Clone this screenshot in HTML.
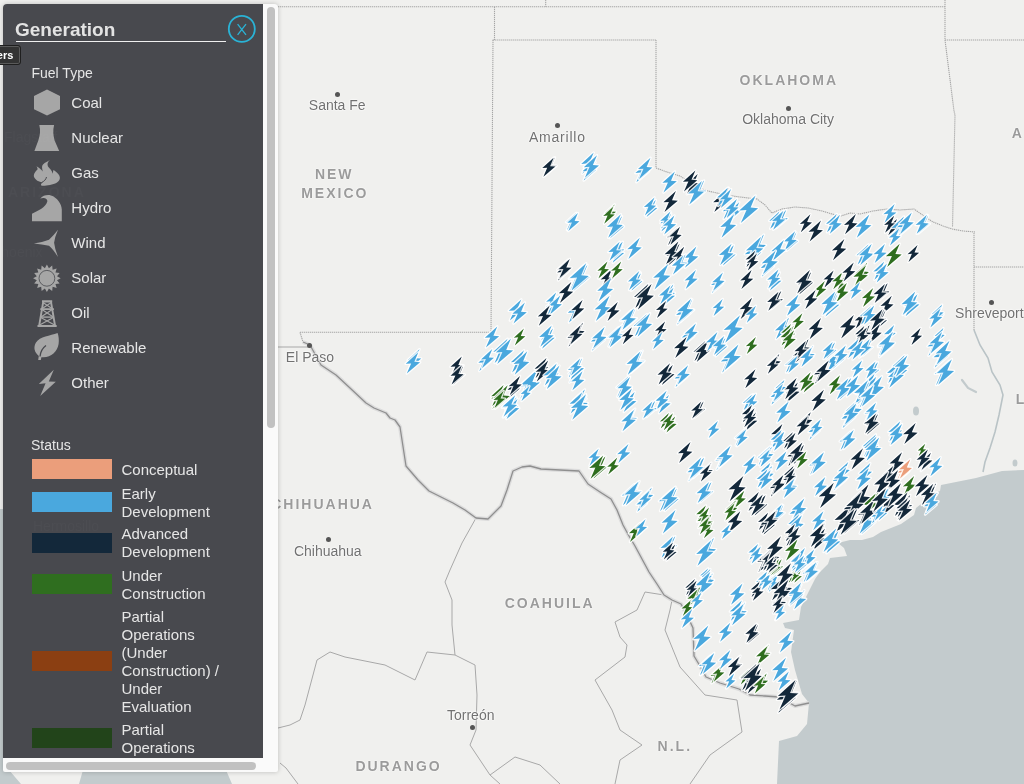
<!DOCTYPE html>
<html><head><meta charset="utf-8">
<style>
html,body{margin:0;padding:0;width:1024px;height:784px;overflow:hidden;background:#f0f0ee;font-family:"Liberation Sans",sans-serif;}
#map{position:absolute;left:0;top:0;width:1024px;height:784px;will-change:transform;}
#map svg{position:absolute;left:0;top:0;}
.us{fill:none;stroke:#a6a6a6;stroke-width:1.1;stroke-dasharray:1.3 0.7;}
.mx{fill:none;stroke:#a8a8a8;stroke-width:1;}
.intl{fill:none;stroke:#8f8f8f;stroke-width:1.3;stroke-linejoin:round;}
.intl2{fill:none;stroke:#dcdcdc;stroke-width:4;stroke-linejoin:round;}
.mb{fill:#4aa8de;}.md{fill:#13283a;}.mg{fill:#2f6e1f;}.mo{fill:#eb9e7b;}.mr{fill:#8b3f12;}.mp{fill:#22441a;}
#mk path{stroke:#fff;stroke-width:2.6;stroke-linejoin:round;stroke-opacity:.85;paint-order:stroke;}
.lbl{position:absolute;color:#717171;font-size:14px;line-height:16px;white-space:nowrap;text-shadow:0 0 2px #fff,0 0 2px #fff,0 0 1px #fff;}
.st{position:absolute;color:#9b9b9b;font-weight:bold;font-size:14px;line-height:16px;letter-spacing:2px;white-space:nowrap;text-shadow:0 0 2px #fff,0 0 1px #fff;}
.dot{position:absolute;width:5px;height:5px;border-radius:50%;background:#555;}
#wrap{position:absolute;left:3px;top:4px;width:275px;height:768px;background:#fafafa;border-radius:4px 4px 2px 2px;box-shadow:0 0 5px rgba(0,0,0,.22);overflow:hidden;}
#panel{will-change:transform;position:absolute;left:0;top:0;width:260px;height:754px;background:#48494e;color:#e6e6e6;overflow:hidden;}
#pc{position:absolute;left:-3px;top:-4px;width:1024px;height:784px;}
.vthumb{position:absolute;left:264.3px;top:3px;width:7.7px;height:421px;border-radius:4px;background:#c1c1c1;}
.hthumb{position:absolute;left:3.2px;top:758px;width:249.5px;height:8px;border-radius:4px;background:#c1c1c1;}
.t{position:absolute;white-space:nowrap;font-size:15px;line-height:18px;}
.sw{position:absolute;left:32px;width:80px;height:20px;}
#tip{will-change:transform;position:absolute;left:-6px;top:45.2px;width:24.7px;height:18.3px;background:#333;border:1px solid #1f1f1f;border-radius:0 3px 3px 0;box-shadow:inset 0 0 0 1px #5a5a5a;color:#fff;font-size:11px;line-height:14px;}
</style></head><body>
<div id="map">
<svg width="1024" height="784">
<path d="M1024 470 L1002 471 L976 478 L941 485 L940 491 L935 493 L916 508 L914 515 L901 524 L881 532 L873 537 L862 540 L850 540 L838 543 L844 548 L847 556 L830 558 L828 564 L820 572 L815 579 L807 595 L801 607 L799 620 L783 623 L785 628 L794 630 L791 652 L795 670 L802 694 L809 703 L807 724 L797 736 L779 741 L777 784 L1024 784 Z" fill="#c3cbcd"/>
<path d="M0 509 L6 509 L6 784 L0 784 Z" fill="#c3cbcd"/>
<path d="M0 770 L9 770 L21 784 L0 784 Z M83 770 L226 770 L232 784 L79 784 Z" fill="#c3cbcd"/>
<path d="M278 6.7 L945 6.7" class="us"/>
<path d="M545.7 0 L545.7 6.7" class="us"/>
<path d="M945 0 L945 40" class="us"/>
<path d="M494.5 6.7 L494.5 40" class="us"/>
<path d="M492.6 40 L656 40" class="us"/>
<path d="M945 40 L1024 40" class="us"/>
<path d="M493 40 L491 332.3" class="us"/>
<path d="M656 40 L656 168" class="us"/>
<path d="M300 332.3 L491 332.3" class="us"/>
<path d="M300 332.3 L303 342" class="us"/>
<path d="M945 40 L954 111 L955 115 L952.5 227" class="us"/>
<path d="M974 233 L974 330" class="us"/>
<path d="M974 267 L1024 267" class="us"/>
<path d="M656 168 L667 172 L680 176 L699 188 L708 191 L726 195 L740 197 L757 199 L765 205 L772 213 L782 209 L795 207 L808 208 L822 211 L832 214 L841 216 L850 213 L860 214 L873 211 L887 209 L900 210 L914 209 L924 216 L933 222 L943 226 L952 229 L963 231 L975 232" class="us"/>
<path d="M278 347 L310 347" class="mx"/>
<path d="M476 518 L462 543 L450 570 L445 582 L452 600 L452 625 L455 655 L475 665 L477 695 L476 730 L470 745 L480 760 L490 775 L500 784" class="mx"/>
<path d="M455 655 L427 652 L415 680 L385 665 L345 657 L330 652 L317 660 L305 705 L300 720 L290 725 L278 728" class="mx"/>
<path d="M490 775 L515 757 L540 765 L560 784" class="mx"/>
<path d="M664 595 L645 592 L637 610 L615 622 L620 637 L627 645 L625 657 L595 680 L612 710 L620 730 L642 745 L620 760 L615 784" class="mx"/>
<path d="M672 600 L670 610 L665 630 L680 667 L705 695 L737 700 L742 732 L710 755 L690 784" class="mx"/>
<path d="M974 330 L980 345 L988 358 L992 372 L1000 385 L1003 395 L999 415 L995 432 L990 448 L985 462 L983 472" fill="none" stroke="#b9c3c6" stroke-width="1.6"/>
<path d="M962 380 L968 388 L976 392" fill="none" stroke="#c3cbcd" stroke-width="2.2" stroke-linecap="round"/>
<ellipse cx="916" cy="411" rx="3" ry="4.5" fill="#c3cbcd"/><ellipse cx="1015" cy="463" rx="2.5" ry="3.5" fill="#c3cbcd"/>
<path d="M280 763 L286 768 L292 776 L298 784" fill="none" stroke="#a8a8a8" stroke-width="1"/>
<path d="M303 342 L310 345 L321 365 L336 375 L350 388 L366 403 L374 408 L386 413 L390 418 L395 420 L400 427 L402 440 L406 466 L418 480 L429 491 L441 497 L453 503 L465 510 L476 518 L488 519 L501 506 L507 490 L513 471 L522 467 L530 466 L541 469 L560 470 L579 471 L588 484 L600 492 L611 499 L617 510 L623 525 L629 536 L635 546 L642 559 L649 572 L657 584 L664 595 L672 600 L681 604 L687 615 L693 628 L694 656 L700 666 L706 677 L720 683 L739 689 L750 695 L765 696 L779 697 L795 706 L809 703" class="intl2"/>
<path d="M303 342 L310 345 L321 365 L336 375 L350 388 L366 403 L374 408 L386 413 L390 418 L395 420 L400 427 L402 440 L406 466 L418 480 L429 491 L441 497 L453 503 L465 510 L476 518 L488 519 L501 506 L507 490 L513 471 L522 467 L530 466 L541 469 L560 470 L579 471 L588 484 L600 492 L611 499 L617 510 L623 525 L629 536 L635 546 L642 559 L649 572 L657 584 L664 595 L672 600 L681 604 L687 615 L693 628 L694 656 L700 666 L706 677 L720 683 L739 689 L750 695 L765 696 L779 697 L795 706 L809 703" class="intl"/>
</svg>
<div class="lbl" style="left:308.8px;top:96.9px">Santa Fe</div>
<div class="lbl" style="left:528.9px;top:128.6px;letter-spacing:0.8px">Amarillo</div>
<div class="lbl" style="left:742.2px;top:110.8px">Oklahoma City</div>
<div class="lbl" style="left:285.8px;top:348.6px">El Paso</div>
<div class="lbl" style="left:293.9px;top:543.0px">Chihuahua</div>
<div class="lbl" style="left:447.0px;top:707.4px">Torreón</div>
<div class="lbl" style="left:955.1px;top:305.0px">Shreveport</div>
<div class="st" style="left:314.9px;top:166.3px">NEW</div>
<div class="st" style="left:301.2px;top:185.1px">MEXICO</div>
<div class="st" style="left:739.6px;top:72.3px">OKLAHOMA</div>
<div class="st" style="left:271.2px;top:495.7px">CHIHUAHUA</div>
<div class="st" style="left:504.7px;top:595.0px">COAHUILA</div>
<div class="st" style="left:355.4px;top:758.3px">DURANGO</div>
<div class="st" style="left:657.6px;top:738.4px">N.L.</div>
<div class="st" style="left:1011.7px;top:125.1px">A</div>
<div class="st" style="left:1015.7px;top:391.1px">L</div>
<div class="dot" style="left:334.5px;top:91.5px"></div>
<div class="dot" style="left:555.0px;top:123.2px"></div>
<div class="dot" style="left:786.2px;top:105.7px"></div>
<div class="dot" style="left:307.0px;top:343.1px"></div>
<div class="dot" style="left:326.1px;top:536.9px"></div>
<div class="dot" style="left:470.2px;top:725.3px"></div>
<div class="dot" style="left:988.5px;top:300.2px"></div>
<svg width="1024" height="784" id="mk">
<path class="md" d="M554.9 157.4 L544.1 167.2 L548.8 166.8 L545.1 175.5 L556.5 165.7 L551.5 165.4 Z"/>
<path class="md" d="M553.6 157.8 L542.3 168.1 L547.2 167.7 L543.4 176.8 L555.3 166.5 L550.1 166.2 Z"/>
<path class="mb" d="M593.7 152.6 L581.2 164.0 L586.7 163.6 L582.4 173.7 L595.6 162.3 L589.8 161.9 Z"/>
<path class="mb" d="M594.4 160.5 L582.6 171.3 L587.8 170.9 L583.7 180.5 L596.2 169.7 L590.8 169.3 Z"/>
<path class="mb" d="M597.0 155.3 L583.8 167.3 L589.6 166.8 L585.0 177.5 L599.0 165.5 L592.9 165.1 Z"/>
<path class="mb" d="M576.2 212.9 L566.1 222.2 L570.5 221.8 L567.0 230.0 L577.7 220.8 L573.1 220.4 Z"/>
<path class="mb" d="M577.9 213.0 L567.3 222.7 L571.9 222.4 L568.3 231.0 L579.5 221.3 L574.6 220.9 Z"/>
<path class="md" d="M568.1 259.8 L557.3 269.6 L562.0 269.3 L558.3 278.0 L569.7 268.2 L564.7 267.8 Z"/>
<path class="md" d="M567.3 263.2 L557.2 272.5 L561.6 272.1 L558.1 280.4 L568.8 271.1 L564.2 270.7 Z"/>
<path class="md" d="M569.8 259.0 L558.5 269.3 L563.4 268.9 L559.6 278.0 L571.5 267.7 L566.3 267.4 Z"/>
<path class="mb" d="M587.4 265.0 L571.9 279.1 L578.7 278.6 L573.3 291.1 L589.7 277.0 L582.6 276.5 Z"/>
<path class="mb" d="M583.5 265.4 L568.9 278.8 L575.3 278.3 L570.2 290.2 L585.7 276.8 L579.0 276.3 Z"/>
<path class="mb" d="M586.2 263.2 L569.9 278.1 L577.1 277.6 L571.4 290.8 L588.7 275.9 L581.2 275.3 Z"/>
<path class="mb" d="M419.5 349.3 L407.6 360.2 L412.8 359.8 L408.6 369.4 L421.2 358.6 L415.8 358.2 Z"/>
<path class="mb" d="M418.2 352.4 L405.7 363.8 L411.2 363.4 L406.8 373.6 L420.1 362.2 L414.3 361.7 Z"/>
<path class="md" d="M461.8 356.5 L450.5 366.8 L455.4 366.4 L451.6 375.5 L463.5 365.2 L458.3 364.9 Z"/>
<path class="md" d="M463.1 366.3 L452.3 376.1 L457.0 375.7 L453.3 384.4 L464.7 374.6 L459.7 374.2 Z"/>
<path class="md" d="M461.8 365.5 L450.5 375.8 L455.4 375.4 L451.6 384.5 L463.5 374.2 L458.3 373.9 Z"/>
<path class="mb" d="M521.3 299.4 L508.8 310.8 L514.3 310.4 L509.9 320.6 L523.2 309.2 L517.4 308.7 Z"/>
<path class="mb" d="M524.9 302.4 L512.4 313.8 L517.9 313.4 L513.5 323.6 L526.8 312.2 L521.0 311.7 Z"/>
<path class="md" d="M571.3 281.9 L558.8 293.3 L564.3 292.9 L559.9 303.1 L573.2 291.7 L567.4 291.2 Z"/>
<path class="mb" d="M557.0 297.0 L546.2 306.8 L550.9 306.5 L547.2 315.2 L558.6 305.4 L553.6 305.0 Z"/>
<path class="mb" d="M556.2 292.4 L546.1 301.7 L550.5 301.3 L547.0 309.6 L557.7 300.3 L553.1 299.9 Z"/>
<path class="mb" d="M560.2 295.5 L548.9 305.8 L553.8 305.4 L550.0 314.5 L561.9 304.2 L556.7 303.9 Z"/>
<path class="md" d="M549.7 305.6 L537.8 316.5 L543.0 316.1 L538.8 325.8 L551.4 314.9 L546.0 314.5 Z"/>
<path class="mb" d="M497.3 326.4 L484.8 337.8 L490.3 337.4 L485.9 347.6 L499.2 336.2 L493.4 335.7 Z"/>
<path class="mg" d="M523.9 328.5 L513.8 337.7 L518.2 337.3 L514.8 345.5 L525.4 336.3 L520.8 336.0 Z"/>
<path class="mb" d="M507.6 338.7 L493.3 351.8 L499.5 351.3 L494.6 362.9 L509.7 349.9 L503.1 349.4 Z"/>
<path class="mb" d="M510.9 338.7 L495.9 352.4 L502.4 351.9 L497.2 364.1 L513.1 350.4 L506.2 349.9 Z"/>
<path class="mb" d="M489.1 352.9 L478.3 362.7 L483.0 362.4 L479.3 371.1 L490.7 361.3 L485.7 360.9 Z"/>
<path class="mb" d="M492.3 349.1 L481.0 359.4 L485.9 359.0 L482.1 368.1 L494.0 357.8 L488.8 357.5 Z"/>
<path class="mb" d="M553.0 328.5 L541.1 339.4 L546.3 339.0 L542.1 348.7 L554.7 337.8 L549.3 337.4 Z"/>
<path class="mb" d="M551.7 325.6 L539.2 337.1 L544.7 336.7 L540.3 346.8 L553.6 335.4 L547.8 335.0 Z"/>
<path class="md" d="M578.8 327.5 L567.5 337.8 L572.4 337.4 L568.6 346.5 L580.5 336.2 L575.3 335.9 Z"/>
<path class="mb" d="M524.0 350.3 L510.9 362.3 L516.6 361.8 L512.1 372.5 L525.9 360.5 L519.9 360.1 Z"/>
<path class="mb" d="M527.3 351.3 L513.5 363.9 L519.5 363.5 L514.7 374.7 L529.3 362.1 L523.0 361.6 Z"/>
<path class="mb" d="M534.5 372.3 L519.0 386.5 L525.8 386.0 L520.4 398.5 L536.8 384.4 L529.7 383.9 Z"/>
<path class="mb" d="M537.3 369.8 L521.0 384.7 L528.2 384.2 L522.5 397.4 L539.8 382.5 L532.3 381.9 Z"/>
<path class="md" d="M546.5 357.9 L534.6 368.8 L539.8 368.3 L535.6 378.0 L548.2 367.1 L542.8 366.7 Z"/>
<path class="md" d="M548.2 360.4 L535.7 371.8 L541.2 371.4 L536.8 381.6 L550.1 370.2 L544.3 369.7 Z"/>
<path class="mb" d="M556.7 363.4 L543.6 375.4 L549.3 375.0 L544.8 385.6 L558.6 373.6 L552.6 373.2 Z"/>
<path class="mb" d="M559.5 365.6 L545.7 378.2 L551.7 377.8 L546.9 389.0 L561.5 376.4 L555.2 375.9 Z"/>
<path class="md" d="M518.3 380.0 L507.5 389.8 L512.2 389.5 L508.5 398.2 L519.9 388.4 L514.9 388.0 Z"/>
<path class="md" d="M520.0 375.9 L508.7 386.2 L513.6 385.8 L509.8 394.9 L521.7 384.6 L516.5 384.3 Z"/>
<path class="mg" d="M504.4 386.5 L491.3 398.5 L497.0 398.0 L492.5 408.7 L506.3 396.7 L500.3 396.3 Z"/>
<path class="mg" d="M503.6 384.9 L491.2 396.2 L496.6 395.8 L492.3 405.9 L505.4 394.6 L499.7 394.1 Z"/>
<path class="mg" d="M507.7 385.3 L493.9 397.9 L499.9 397.5 L495.1 408.7 L509.7 396.1 L503.4 395.6 Z"/>
<path class="mb" d="M516.6 397.4 L504.7 408.2 L509.9 407.8 L505.7 417.5 L518.3 406.6 L512.9 406.2 Z"/>
<path class="mb" d="M514.3 396.2 L501.8 407.6 L507.3 407.2 L502.9 417.4 L516.2 406.0 L510.4 405.5 Z"/>
<path class="mb" d="M580.4 362.5 L568.5 373.4 L573.7 373.0 L569.5 382.6 L582.1 371.8 L576.7 371.3 Z"/>
<path class="mb" d="M582.1 358.4 L569.6 369.8 L575.1 369.4 L570.7 379.6 L584.0 368.2 L578.2 367.7 Z"/>
<path class="mb" d="M584.9 389.4 L573.0 400.3 L578.2 399.9 L574.0 409.6 L586.6 398.7 L581.2 398.3 Z"/>
<path class="mb" d="M582.1 392.4 L569.6 403.8 L575.1 403.4 L570.7 413.6 L584.0 402.2 L578.2 401.7 Z"/>
<path class="mb" d="M580.3 301.4 L567.8 312.8 L573.3 312.4 L568.9 322.6 L582.2 311.2 L576.4 310.7 Z"/>
<path class="mb" d="M647.3 162.2 L635.4 173.1 L640.6 172.6 L636.4 182.3 L649.0 171.4 L643.6 171.0 Z"/>
<path class="mb" d="M650.5 157.7 L638.0 169.1 L643.5 168.7 L639.1 178.9 L652.4 167.5 L646.6 167.0 Z"/>
<path class="mb" d="M674.9 171.4 L662.4 182.8 L667.9 182.4 L663.5 192.6 L676.8 181.2 L671.0 180.7 Z"/>
<path class="md" d="M697.7 174.0 L685.8 184.9 L691.0 184.5 L686.8 194.2 L699.4 183.3 L694.0 182.9 Z"/>
<path class="md" d="M695.4 170.4 L682.9 181.8 L688.4 181.4 L684.0 191.6 L697.3 180.2 L691.5 179.7 Z"/>
<path class="mb" d="M704.1 180.5 L691.0 192.4 L696.7 192.0 L692.2 202.6 L706.0 190.7 L700.0 190.2 Z"/>
<path class="mb" d="M701.9 181.0 L688.1 193.6 L694.1 193.2 L689.3 204.4 L703.9 191.8 L697.6 191.3 Z"/>
<path class="md" d="M675.9 190.9 L663.4 202.3 L668.9 201.9 L664.5 212.1 L677.8 200.7 L672.0 200.2 Z"/>
<path class="mb" d="M655.8 200.0 L645.7 209.2 L650.1 208.9 L646.6 217.1 L657.3 207.9 L652.7 207.5 Z"/>
<path class="mb" d="M654.5 197.4 L643.9 207.1 L648.5 206.8 L644.9 215.4 L656.1 205.7 L651.2 205.3 Z"/>
<path class="md" d="M727.0 190.6 L715.1 201.5 L720.3 201.1 L716.1 210.8 L728.7 199.9 L723.3 199.5 Z"/>
<path class="md" d="M728.7 187.8 L717.4 198.1 L722.3 197.7 L718.5 206.8 L730.4 196.5 L725.2 196.2 Z"/>
<path class="md" d="M725.7 190.9 L713.2 202.3 L718.7 201.9 L714.3 212.1 L727.6 200.7 L721.8 200.2 Z"/>
<path class="mb" d="M727.8 187.8 L717.1 197.5 L721.8 197.2 L718.1 205.9 L729.4 196.1 L724.5 195.7 Z"/>
<path class="mb" d="M731.1 189.1 L719.8 199.4 L724.7 199.0 L720.8 208.1 L732.7 197.8 L727.5 197.5 Z"/>
<path class="mb" d="M739.2 202.2 L728.4 212.0 L733.1 211.7 L729.4 220.4 L740.8 210.6 L735.8 210.2 Z"/>
<path class="mb" d="M732.9 201.9 L722.8 211.2 L727.2 210.8 L723.7 219.0 L734.4 209.8 L729.8 209.4 Z"/>
<path class="mb" d="M736.9 198.9 L725.6 209.2 L730.5 208.8 L726.7 217.9 L738.6 207.6 L733.4 207.3 Z"/>
<path class="mb" d="M755.6 195.5 L739.3 210.4 L746.5 209.9 L740.8 223.1 L758.1 208.2 L750.6 207.6 Z"/>
<path class="mb" d="M734.1 214.3 L720.3 226.9 L726.3 226.5 L721.5 237.7 L736.1 225.1 L729.8 224.6 Z"/>
<path class="mg" d="M614.6 204.4 L605.0 213.1 L609.2 212.7 L605.9 220.5 L616.0 211.8 L611.6 211.4 Z"/>
<path class="mg" d="M613.3 206.7 L603.2 215.9 L607.6 215.5 L604.2 223.7 L614.8 214.5 L610.2 214.2 Z"/>
<path class="mb" d="M622.0 216.2 L608.9 228.2 L614.6 227.7 L610.1 238.3 L623.9 226.4 L617.9 225.9 Z"/>
<path class="mb" d="M620.8 214.3 L607.0 226.9 L613.0 226.5 L608.2 237.7 L622.8 225.1 L616.5 224.6 Z"/>
<path class="mb" d="M671.2 213.4 L660.4 223.2 L665.1 222.8 L661.4 231.5 L672.8 221.7 L667.8 221.4 Z"/>
<path class="mb" d="M670.4 211.5 L660.3 220.7 L664.7 220.4 L661.2 228.6 L671.9 219.4 L667.3 219.0 Z"/>
<path class="mb" d="M674.4 215.5 L663.1 225.8 L668.0 225.4 L664.2 234.5 L676.1 224.2 L670.9 223.9 Z"/>
<path class="md" d="M677.3 228.0 L667.2 237.3 L671.6 236.9 L668.1 245.1 L678.8 235.9 L674.2 235.6 Z"/>
<path class="md" d="M680.0 226.7 L669.4 236.4 L674.0 236.1 L670.4 244.7 L681.6 235.0 L676.7 234.6 Z"/>
<path class="md" d="M679.6 243.7 L666.5 255.7 L672.2 255.3 L667.7 265.9 L681.5 253.9 L675.5 253.5 Z"/>
<path class="md" d="M678.4 241.6 L664.6 254.2 L670.6 253.8 L665.8 265.0 L680.4 252.4 L674.1 251.9 Z"/>
<path class="md" d="M684.2 246.7 L672.9 257.0 L677.8 256.6 L674.0 265.7 L685.9 255.4 L680.7 255.1 Z"/>
<path class="mb" d="M696.4 246.6 L683.9 258.0 L689.4 257.6 L685.0 267.8 L698.3 256.4 L692.5 255.9 Z"/>
<path class="mb" d="M639.8 237.8 L627.3 249.2 L632.8 248.8 L628.4 259.0 L641.7 247.6 L635.9 247.1 Z"/>
<path class="mb" d="M622.5 244.6 L611.7 254.4 L616.4 254.0 L612.7 262.7 L624.1 253.0 L619.1 252.6 Z"/>
<path class="mb" d="M622.7 241.7 L612.6 251.0 L617.0 250.6 L613.5 258.9 L624.2 249.6 L619.6 249.3 Z"/>
<path class="mb" d="M619.7 241.8 L608.4 252.1 L613.3 251.7 L609.5 260.8 L621.4 250.5 L616.2 250.2 Z"/>
<path class="mb" d="M733.8 245.3 L721.9 256.2 L727.1 255.8 L723.0 265.4 L735.6 254.6 L730.1 254.2 Z"/>
<path class="mb" d="M731.6 243.7 L719.0 255.1 L724.5 254.7 L720.2 264.9 L733.5 253.5 L727.7 253.0 Z"/>
<path class="mb" d="M759.2 241.2 L744.9 254.2 L751.1 253.8 L746.2 265.4 L761.3 252.3 L754.7 251.8 Z"/>
<path class="mb" d="M763.9 234.6 L750.3 246.9 L756.2 246.5 L751.6 257.5 L765.9 245.1 L759.7 244.6 Z"/>
<path class="mb" d="M761.0 236.7 L746.0 250.4 L752.5 249.9 L747.3 262.1 L763.2 248.4 L756.3 247.9 Z"/>
<path class="md" d="M755.2 250.8 L745.6 259.5 L749.8 259.1 L746.5 266.9 L756.6 258.2 L752.2 257.9 Z"/>
<path class="md" d="M756.9 253.5 L746.8 262.7 L751.2 262.3 L747.8 270.5 L758.4 261.3 L753.8 261.0 Z"/>
<path class="mb" d="M772.1 257.5 L760.8 267.8 L765.7 267.4 L761.9 276.5 L773.8 266.2 L768.6 265.9 Z"/>
<path class="mg" d="M607.5 261.5 L597.4 270.7 L601.8 270.3 L598.4 278.5 L609.0 269.3 L604.4 269.0 Z"/>
<path class="md" d="M611.9 269.2 L600.6 279.5 L605.5 279.1 L601.7 288.2 L613.6 277.9 L608.4 277.6 Z"/>
<path class="mg" d="M621.2 261.5 L611.1 270.7 L615.5 270.3 L612.1 278.5 L622.7 269.3 L618.1 269.0 Z"/>
<path class="mb" d="M640.6 272.4 L629.8 282.2 L634.5 281.9 L630.8 290.6 L642.2 280.8 L637.2 280.4 Z"/>
<path class="mb" d="M640.8 273.4 L630.7 282.6 L635.1 282.3 L631.6 290.5 L642.3 281.3 L637.7 280.9 Z"/>
<path class="mb" d="M639.3 271.1 L628.0 281.4 L632.9 281.0 L629.1 290.1 L641.0 279.8 L635.8 279.5 Z"/>
<path class="mb" d="M668.2 264.0 L653.2 277.7 L659.7 277.2 L654.5 289.4 L670.4 275.7 L663.5 275.2 Z"/>
<path class="mb" d="M695.9 270.1 L684.6 280.4 L689.5 280.0 L685.7 289.1 L697.6 278.8 L692.4 278.5 Z"/>
<path class="mb" d="M721.2 275.8 L711.1 285.1 L715.5 284.7 L712.0 293.0 L722.7 283.7 L718.1 283.4 Z"/>
<path class="mb" d="M722.9 272.6 L712.3 282.3 L716.9 282.0 L713.3 290.6 L724.5 280.9 L719.6 280.5 Z"/>
<path class="md" d="M751.6 270.1 L740.3 280.4 L745.2 280.0 L741.4 289.1 L753.3 278.8 L748.1 278.5 Z"/>
<path class="mb" d="M685.5 254.4 L674.7 264.2 L679.4 263.9 L675.7 272.6 L687.1 262.8 L682.1 262.4 Z"/>
<path class="mb" d="M683.2 255.5 L671.9 265.8 L676.8 265.4 L673.0 274.5 L684.9 264.2 L679.7 263.9 Z"/>
<path class="mb" d="M786.2 210.0 L775.4 219.8 L780.1 219.4 L776.4 228.1 L787.8 218.3 L782.8 218.0 Z"/>
<path class="mb" d="M779.4 211.5 L769.3 220.8 L773.7 220.4 L770.2 228.7 L780.9 219.4 L776.3 219.1 Z"/>
<path class="mb" d="M783.4 210.8 L772.1 221.1 L777.0 220.7 L773.2 229.8 L785.1 219.5 L779.9 219.2 Z"/>
<path class="md" d="M810.4 214.2 L799.8 223.9 L804.4 223.6 L800.8 232.2 L812.0 222.5 L807.1 222.1 Z"/>
<path class="md" d="M821.0 220.4 L808.5 231.8 L814.0 231.4 L809.6 241.6 L822.9 230.2 L817.1 229.7 Z"/>
<path class="mb" d="M836.8 214.0 L826.0 223.8 L830.7 223.5 L827.0 232.2 L838.4 222.4 L833.4 222.0 Z"/>
<path class="mb" d="M840.0 214.7 L828.7 225.0 L833.6 224.6 L829.8 233.7 L841.7 223.4 L836.5 223.1 Z"/>
<path class="md" d="M855.9 214.1 L844.0 225.0 L849.2 224.6 L845.0 234.3 L857.6 223.4 L852.2 223.0 Z"/>
<path class="mb" d="M869.4 214.4 L855.6 227.0 L861.6 226.6 L856.8 237.8 L871.4 225.2 L865.1 224.7 Z"/>
<path class="mb" d="M894.7 203.9 L883.4 214.2 L888.3 213.8 L884.5 222.9 L896.4 212.6 L891.2 212.3 Z"/>
<path class="md" d="M897.0 219.1 L887.4 227.8 L891.6 227.4 L888.3 235.2 L898.4 226.5 L894.0 226.1 Z"/>
<path class="md" d="M894.2 215.7 L884.1 224.9 L888.5 224.5 L885.1 232.7 L895.7 223.5 L891.1 223.2 Z"/>
<path class="mb" d="M904.0 216.5 L891.5 227.9 L897.0 227.5 L892.6 237.7 L905.9 226.3 L900.1 225.8 Z"/>
<path class="mb" d="M909.1 216.4 L897.2 227.3 L902.4 226.9 L898.2 236.5 L910.8 225.7 L905.4 225.3 Z"/>
<path class="mb" d="M911.8 212.6 L899.3 224.0 L904.8 223.6 L900.4 233.8 L913.7 222.4 L907.9 221.9 Z"/>
<path class="mb" d="M928.2 215.4 L917.4 225.2 L922.1 224.8 L918.4 233.5 L929.8 223.7 L924.8 223.4 Z"/>
<path class="mb" d="M926.9 214.7 L915.6 225.0 L920.5 224.6 L916.7 233.7 L928.6 223.4 L923.4 223.1 Z"/>
<path class="mb" d="M899.1 228.4 L889.0 237.6 L893.4 237.2 L890.0 245.4 L900.6 236.2 L896.0 235.9 Z"/>
<path class="mb" d="M796.4 232.6 L785.6 242.4 L790.3 242.1 L786.6 250.8 L798.0 241.0 L793.0 240.6 Z"/>
<path class="mb" d="M795.1 231.3 L783.8 241.6 L788.7 241.2 L784.9 250.3 L796.8 240.0 L791.6 239.7 Z"/>
<path class="mb" d="M783.9 239.9 L771.4 251.3 L776.9 250.9 L772.5 261.1 L785.8 249.7 L780.0 249.2 Z"/>
<path class="mb" d="M775.7 250.6 L761.9 263.2 L767.9 262.8 L763.1 274.0 L777.7 261.4 L771.4 260.9 Z"/>
<path class="mb" d="M779.8 272.4 L769.0 282.2 L773.7 281.8 L770.0 290.5 L781.4 280.7 L776.4 280.4 Z"/>
<path class="mb" d="M778.5 269.4 L767.2 279.7 L772.1 279.3 L768.3 288.4 L780.2 278.1 L775.0 277.8 Z"/>
<path class="md" d="M844.4 239.0 L831.9 250.4 L837.4 250.0 L833.0 260.2 L846.3 248.8 L840.5 248.3 Z"/>
<path class="mb" d="M868.5 244.4 L856.6 255.2 L861.8 254.8 L857.6 264.5 L870.2 253.6 L864.8 253.2 Z"/>
<path class="mb" d="M871.7 243.9 L859.2 255.3 L864.7 254.9 L860.3 265.1 L873.6 253.7 L867.8 253.2 Z"/>
<path class="mb" d="M884.9 244.0 L873.6 254.3 L878.5 253.9 L874.7 263.0 L886.6 252.7 L881.4 252.4 Z"/>
<path class="mg" d="M899.7 243.7 L885.9 256.3 L891.9 255.9 L887.1 267.1 L901.7 254.5 L895.4 254.0 Z"/>
<path class="md" d="M917.6 245.0 L907.5 254.2 L911.9 253.8 L908.5 262.0 L919.1 252.8 L914.5 252.5 Z"/>
<path class="md" d="M811.1 272.3 L798.0 284.2 L803.7 283.8 L799.2 294.4 L813.0 282.5 L807.0 282.0 Z"/>
<path class="md" d="M809.9 270.1 L796.1 282.7 L802.1 282.3 L797.3 293.5 L811.9 280.9 L805.6 280.4 Z"/>
<path class="md" d="M833.6 270.4 L823.5 279.6 L827.9 279.2 L824.5 287.4 L835.1 278.2 L830.5 277.9 Z"/>
<path class="mg" d="M845.2 276.6 L835.6 285.3 L839.8 285.0 L836.5 292.8 L846.6 284.1 L842.2 283.7 Z"/>
<path class="mg" d="M842.4 272.3 L832.3 281.5 L836.7 281.1 L833.3 289.3 L843.9 280.1 L839.3 279.8 Z"/>
<path class="md" d="M853.7 262.5 L842.4 272.8 L847.3 272.4 L843.5 281.5 L855.4 271.2 L850.2 270.9 Z"/>
<path class="mg" d="M867.2 262.7 L855.3 273.6 L860.5 273.2 L856.3 282.9 L868.9 272.0 L863.5 271.6 Z"/>
<path class="mg" d="M865.9 265.4 L853.4 276.8 L858.9 276.4 L854.5 286.6 L867.8 275.2 L862.0 274.7 Z"/>
<path class="mb" d="M884.2 261.6 L873.4 271.4 L878.1 271.0 L874.4 279.7 L885.8 269.9 L880.8 269.5 Z"/>
<path class="mb" d="M886.9 263.5 L875.6 273.8 L880.5 273.4 L876.7 282.5 L888.6 272.2 L883.4 271.9 Z"/>
<path class="mg" d="M824.8 281.1 L814.7 290.3 L819.1 289.9 L815.7 298.1 L826.3 288.9 L821.7 288.6 Z"/>
<path class="mg" d="M846.8 283.0 L835.5 293.3 L840.4 292.9 L836.6 302.0 L848.5 291.7 L843.3 291.4 Z"/>
<path class="mb" d="M860.0 282.1 L849.9 291.3 L854.3 290.9 L850.9 299.1 L861.5 289.9 L856.9 289.6 Z"/>
<path class="md" d="M887.7 283.2 L876.9 293.0 L881.6 292.6 L877.9 301.3 L889.3 291.5 L884.3 291.2 Z"/>
<path class="md" d="M884.9 284.0 L873.6 294.3 L878.5 293.9 L874.7 303.0 L886.6 292.7 L881.4 292.4 Z"/>
<path class="mg" d="M873.2 287.9 L861.9 298.2 L866.8 297.8 L863.0 306.9 L874.9 296.6 L869.7 296.3 Z"/>
<path class="md" d="M815.6 289.9 L804.3 300.2 L809.2 299.8 L805.4 308.9 L817.3 298.6 L812.1 298.3 Z"/>
<path class="mb" d="M837.4 294.5 L824.3 306.4 L830.0 306.0 L825.5 316.6 L839.3 304.7 L833.3 304.2 Z"/>
<path class="mb" d="M836.6 292.6 L824.2 303.9 L829.6 303.5 L825.3 313.6 L838.4 302.2 L832.7 301.8 Z"/>
<path class="mb" d="M835.2 291.6 L821.4 304.2 L827.4 303.8 L822.6 315.0 L837.2 302.4 L830.9 301.9 Z"/>
<path class="md" d="M781.3 290.9 L770.5 300.7 L775.2 300.3 L771.5 309.0 L782.9 299.2 L777.9 298.9 Z"/>
<path class="md" d="M778.5 291.8 L767.2 302.1 L772.1 301.7 L768.3 310.8 L780.2 300.5 L775.0 300.2 Z"/>
<path class="mb" d="M798.5 294.6 L786.0 306.0 L791.5 305.6 L787.1 315.8 L800.4 304.4 L794.6 303.9 Z"/>
<path class="md" d="M891.8 295.7 L880.5 306.0 L885.4 305.6 L881.6 314.7 L893.5 304.4 L888.3 304.1 Z"/>
<path class="mb" d="M917.5 294.2 L904.4 306.1 L910.1 305.7 L905.6 316.3 L919.4 304.4 L913.4 303.9 Z"/>
<path class="mb" d="M915.3 291.6 L901.5 304.2 L907.5 303.8 L902.7 315.0 L917.3 302.4 L911.0 301.9 Z"/>
<path class="mb" d="M941.9 306.2 L931.1 316.0 L935.8 315.6 L932.1 324.3 L943.5 314.5 L938.5 314.2 Z"/>
<path class="mb" d="M942.1 304.6 L932.0 313.9 L936.4 313.5 L932.9 321.8 L943.6 312.5 L939.0 312.1 Z"/>
<path class="mb" d="M940.6 308.4 L929.3 318.7 L934.2 318.3 L930.4 327.4 L942.3 317.1 L937.1 316.8 Z"/>
<path class="mg" d="M802.4 313.3 L792.3 322.5 L796.7 322.1 L793.3 330.3 L803.9 321.1 L799.3 320.8 Z"/>
<path class="mb" d="M789.1 317.7 L778.3 327.5 L783.0 327.1 L779.3 335.8 L790.7 326.0 L785.7 325.7 Z"/>
<path class="mb" d="M786.3 320.1 L775.0 330.4 L779.9 330.0 L776.1 339.1 L788.0 328.8 L782.8 328.5 Z"/>
<path class="md" d="M821.0 318.1 L808.5 329.5 L814.0 329.1 L809.6 339.3 L822.9 327.9 L817.1 327.4 Z"/>
<path class="md" d="M853.8 315.0 L840.0 327.6 L846.0 327.2 L841.2 338.4 L855.8 325.8 L849.5 325.3 Z"/>
<path class="md" d="M864.9 311.4 L854.8 320.6 L859.2 320.2 L855.8 328.4 L866.4 319.2 L861.8 318.9 Z"/>
<path class="mb" d="M871.0 306.3 L860.2 316.1 L864.9 315.7 L861.2 324.4 L872.6 314.7 L867.6 314.3 Z"/>
<path class="mb" d="M874.2 305.5 L862.9 315.8 L867.8 315.4 L864.0 324.5 L875.9 314.2 L870.7 313.9 Z"/>
<path class="md" d="M885.3 311.0 L873.4 321.9 L878.6 321.5 L874.4 331.2 L887.0 320.3 L881.6 319.9 Z"/>
<path class="md" d="M884.0 309.7 L872.7 320.0 L877.6 319.6 L873.8 328.8 L885.7 318.5 L880.5 318.1 Z"/>
<path class="md" d="M882.5 309.3 L870.0 320.7 L875.5 320.3 L871.1 330.5 L884.4 319.1 L878.6 318.6 Z"/>
<path class="mb" d="M894.2 325.1 L884.1 334.3 L888.5 333.9 L885.1 342.1 L895.7 332.9 L891.1 332.6 Z"/>
<path class="md" d="M920.6 328.0 L910.5 337.2 L914.9 336.8 L911.5 345.0 L922.1 335.8 L917.5 335.5 Z"/>
<path class="mg" d="M790.9 324.1 L781.3 332.8 L785.5 332.5 L782.2 340.3 L792.3 331.6 L787.9 331.2 Z"/>
<path class="mg" d="M793.6 326.0 L783.5 335.2 L787.9 334.8 L784.5 343.0 L795.1 333.8 L790.5 333.5 Z"/>
<path class="md" d="M880.0 324.1 L868.7 334.4 L873.6 334.0 L869.8 343.1 L881.7 332.8 L876.5 332.5 Z"/>
<path class="mb" d="M943.4 328.1 L934.7 336.1 L938.5 335.8 L935.5 342.9 L944.7 334.9 L940.7 334.6 Z"/>
<path class="md" d="M648.3 284.0 L634.0 297.0 L640.2 296.5 L635.3 308.1 L650.4 295.1 L643.8 294.6 Z"/>
<path class="md" d="M651.6 284.0 L636.6 297.7 L643.1 297.2 L637.9 309.4 L653.8 295.7 L646.9 295.2 Z"/>
<path class="mb" d="M673.3 284.6 L662.5 294.4 L667.2 294.0 L663.5 302.7 L674.9 292.9 L669.9 292.5 Z"/>
<path class="mb" d="M673.5 287.8 L663.4 297.1 L667.8 296.8 L664.3 305.0 L675.0 295.7 L670.4 295.4 Z"/>
<path class="mb" d="M670.5 285.3 L659.2 295.6 L664.1 295.2 L660.3 304.3 L672.2 294.0 L667.0 293.7 Z"/>
<path class="mb" d="M609.6 295.7 L594.6 309.4 L601.1 308.9 L595.9 321.1 L611.8 307.4 L604.9 306.9 Z"/>
<path class="md" d="M617.8 301.9 L606.5 312.2 L611.4 311.8 L607.6 320.9 L619.5 310.6 L614.3 310.3 Z"/>
<path class="md" d="M582.6 299.9 L571.3 310.2 L576.2 309.8 L572.4 318.9 L584.3 308.6 L579.1 308.3 Z"/>
<path class="md" d="M666.1 300.9 L656.0 310.1 L660.4 309.7 L657.0 317.9 L667.6 308.7 L663.0 308.4 Z"/>
<path class="mb" d="M692.3 299.5 L679.2 311.5 L684.9 311.0 L680.4 321.7 L694.2 309.7 L688.2 309.3 Z"/>
<path class="mb" d="M688.5 303.6 L676.1 315.0 L681.5 314.5 L677.2 324.6 L690.3 313.3 L684.6 312.9 Z"/>
<path class="mb" d="M691.1 298.7 L677.3 311.3 L683.3 310.9 L678.5 322.1 L693.1 309.5 L686.8 309.0 Z"/>
<path class="mb" d="M722.7 299.0 L712.6 308.2 L717.0 307.8 L713.6 316.0 L724.2 306.8 L719.6 306.5 Z"/>
<path class="md" d="M752.1 297.8 L739.6 309.2 L745.1 308.8 L740.7 319.0 L754.0 307.6 L748.2 307.1 Z"/>
<path class="mb" d="M755.9 305.8 L745.8 315.0 L750.2 314.6 L746.8 322.8 L757.4 313.6 L752.8 313.3 Z"/>
<path class="mb" d="M635.2 308.9 L623.3 319.8 L628.5 319.4 L624.3 329.1 L636.9 318.2 L631.5 317.8 Z"/>
<path class="mb" d="M631.4 310.2 L620.1 320.5 L625.0 320.1 L621.2 329.3 L633.1 319.0 L627.9 318.6 Z"/>
<path class="mb" d="M633.9 308.6 L621.4 320.0 L626.9 319.6 L622.5 329.8 L635.8 318.4 L630.0 317.9 Z"/>
<path class="mb" d="M646.8 314.2 L633.7 326.1 L639.4 325.7 L634.9 336.3 L648.7 324.4 L642.7 323.9 Z"/>
<path class="mb" d="M650.1 313.3 L636.3 325.9 L642.3 325.5 L637.5 336.7 L652.1 324.1 L645.8 323.6 Z"/>
<path class="mb" d="M602.9 330.7 L591.0 341.6 L596.2 341.2 L592.0 350.8 L604.6 340.0 L599.2 339.6 Z"/>
<path class="mb" d="M604.6 327.1 L592.1 338.5 L597.6 338.1 L593.2 348.3 L606.5 336.9 L600.7 336.4 Z"/>
<path class="mb" d="M622.5 324.9 L610.6 335.8 L615.8 335.4 L611.6 345.0 L624.2 334.2 L618.8 333.8 Z"/>
<path class="mb" d="M618.7 327.3 L607.4 337.6 L612.3 337.2 L608.5 346.4 L620.4 336.1 L615.2 335.7 Z"/>
<path class="mb" d="M621.2 326.1 L608.7 337.6 L614.2 337.2 L609.8 347.3 L623.1 335.9 L617.3 335.5 Z"/>
<path class="md" d="M631.9 327.3 L621.8 336.5 L626.2 336.1 L622.8 344.3 L633.4 335.1 L628.8 334.8 Z"/>
<path class="md" d="M665.1 321.5 L655.0 330.7 L659.4 330.3 L656.0 338.5 L666.6 329.3 L662.0 329.0 Z"/>
<path class="mb" d="M662.2 332.2 L652.1 341.4 L656.5 341.0 L653.1 349.2 L663.7 340.0 L659.1 339.7 Z"/>
<path class="mb" d="M692.7 327.6 L681.9 337.4 L686.6 337.0 L682.9 345.7 L694.3 336.0 L689.3 335.6 Z"/>
<path class="mb" d="M695.9 323.4 L684.6 333.7 L689.5 333.3 L685.7 342.4 L697.6 332.1 L692.4 331.8 Z"/>
<path class="md" d="M686.6 336.9 L674.1 348.3 L679.6 347.9 L675.2 358.1 L688.5 346.7 L682.7 346.2 Z"/>
<path class="md" d="M705.4 340.9 L693.5 351.8 L698.7 351.4 L694.5 361.1 L707.1 350.2 L701.7 349.8 Z"/>
<path class="md" d="M708.1 340.8 L695.6 352.2 L701.1 351.8 L696.7 362.0 L710.0 350.6 L704.2 350.1 Z"/>
<path class="mb" d="M717.4 332.1 L706.1 342.4 L711.0 342.0 L707.2 351.1 L719.1 340.8 L713.9 340.5 Z"/>
<path class="mb" d="M725.5 338.0 L714.7 347.8 L719.4 347.5 L715.7 356.2 L727.1 346.4 L722.1 346.0 Z"/>
<path class="mb" d="M724.2 336.0 L712.9 346.3 L717.8 345.9 L714.0 355.0 L725.9 344.7 L720.7 344.4 Z"/>
<path class="mb" d="M740.0 315.2 L723.7 330.1 L730.9 329.6 L725.2 342.8 L742.5 327.9 L735.0 327.3 Z"/>
<path class="mg" d="M755.9 337.0 L745.8 346.2 L750.2 345.8 L746.8 354.0 L757.4 344.8 L752.8 344.5 Z"/>
<path class="mb" d="M735.2 348.4 L720.9 361.4 L727.1 360.9 L722.2 372.5 L737.3 359.5 L730.7 359.0 Z"/>
<path class="mb" d="M738.5 344.6 L723.5 358.3 L730.0 357.8 L724.8 370.0 L740.7 356.3 L733.8 355.8 Z"/>
<path class="md" d="M583.0 322.8 L572.2 332.6 L576.9 332.3 L573.2 341.0 L584.6 331.2 L579.6 330.8 Z"/>
<path class="md" d="M580.7 325.3 L569.4 335.6 L574.3 335.2 L570.5 344.3 L582.4 334.0 L577.2 333.7 Z"/>
<path class="mb" d="M642.6 350.6 L629.5 362.5 L635.2 362.1 L630.7 372.7 L644.5 360.7 L638.5 360.3 Z"/>
<path class="mb" d="M641.8 351.9 L629.4 363.2 L634.8 362.8 L630.5 372.9 L643.6 361.5 L637.9 361.1 Z"/>
<path class="mb" d="M640.4 351.4 L626.6 364.0 L632.6 363.6 L627.8 374.8 L642.4 362.2 L636.1 361.7 Z"/>
<path class="mb" d="M577.5 361.2 L567.9 369.9 L572.1 369.6 L568.8 377.3 L578.9 368.6 L574.5 368.3 Z"/>
<path class="mb" d="M580.2 358.5 L570.1 367.7 L574.5 367.3 L571.1 375.5 L581.7 366.3 L577.1 366.0 Z"/>
<path class="mb" d="M582.6 371.2 L571.3 381.5 L576.2 381.1 L572.4 390.2 L584.3 379.9 L579.1 379.6 Z"/>
<path class="md" d="M672.8 365.0 L660.9 375.9 L666.1 375.5 L661.9 385.1 L674.5 374.2 L669.1 373.8 Z"/>
<path class="md" d="M670.0 363.3 L657.5 374.7 L663.0 374.3 L658.6 384.5 L671.9 373.1 L666.1 372.6 Z"/>
<path class="mb" d="M685.4 368.8 L674.6 378.6 L679.3 378.2 L675.6 386.9 L687.0 377.1 L682.0 376.8 Z"/>
<path class="mb" d="M688.1 365.3 L676.8 375.6 L681.7 375.2 L677.9 384.3 L689.8 374.0 L684.6 373.7 Z"/>
<path class="md" d="M755.5 369.2 L744.2 379.5 L749.1 379.1 L745.3 388.3 L757.2 378.0 L752.0 377.6 Z"/>
<path class="mb" d="M628.3 376.6 L616.4 387.5 L621.6 387.1 L617.4 396.8 L630.0 385.9 L624.6 385.5 Z"/>
<path class="mb" d="M630.0 376.9 L617.5 388.3 L623.0 387.9 L618.6 398.1 L631.9 386.7 L626.1 386.2 Z"/>
<path class="mb" d="M634.7 391.9 L622.8 402.8 L628.0 402.4 L623.8 412.0 L636.4 401.2 L631.0 400.8 Z"/>
<path class="mb" d="M631.9 388.7 L619.4 400.1 L624.9 399.7 L620.5 409.9 L633.8 398.5 L628.0 398.0 Z"/>
<path class="mb" d="M668.9 395.1 L658.1 404.9 L662.8 404.5 L659.1 413.2 L670.5 403.4 L665.5 403.1 Z"/>
<path class="mb" d="M666.6 390.7 L655.3 401.0 L660.2 400.6 L656.4 409.7 L668.3 399.4 L663.1 399.1 Z"/>
<path class="mb" d="M586.4 395.6 L576.8 404.3 L581.0 404.0 L577.7 411.7 L587.8 403.0 L583.4 402.7 Z"/>
<path class="mb" d="M584.1 397.6 L574.0 406.8 L578.4 406.4 L575.0 414.6 L585.6 405.4 L581.0 405.1 Z"/>
<path class="mb" d="M655.2 400.9 L645.6 409.6 L649.8 409.2 L646.5 417.0 L656.6 408.3 L652.2 408.0 Z"/>
<path class="mb" d="M652.4 401.5 L642.3 410.7 L646.7 410.3 L643.3 418.5 L653.9 409.3 L649.3 409.0 Z"/>
<path class="md" d="M703.6 401.5 L694.0 410.2 L698.2 409.8 L694.9 417.6 L705.0 408.9 L700.6 408.6 Z"/>
<path class="md" d="M701.3 401.5 L691.2 410.7 L695.6 410.3 L692.2 418.5 L702.8 409.3 L698.2 409.0 Z"/>
<path class="mb" d="M753.2 394.3 L743.6 403.0 L747.8 402.7 L744.5 410.4 L754.6 401.7 L750.2 401.4 Z"/>
<path class="mb" d="M751.9 394.7 L742.9 402.9 L746.9 402.6 L743.7 410.0 L753.3 401.7 L749.1 401.4 Z"/>
<path class="mb" d="M755.9 393.7 L745.8 402.9 L750.2 402.5 L746.8 410.7 L757.4 401.5 L752.8 401.2 Z"/>
<path class="md" d="M755.8 412.5 L745.0 422.3 L749.7 421.9 L746.0 430.6 L757.4 420.8 L752.4 420.5 Z"/>
<path class="md" d="M752.0 405.1 L741.9 414.3 L746.3 414.0 L742.8 422.2 L753.5 413.0 L748.9 412.6 Z"/>
<path class="md" d="M754.5 408.3 L743.2 418.6 L748.1 418.2 L744.3 427.3 L756.2 417.0 L751.0 416.7 Z"/>
<path class="mb" d="M635.2 408.8 L623.3 419.7 L628.5 419.3 L624.3 428.9 L636.9 418.1 L631.5 417.7 Z"/>
<path class="mb" d="M633.9 410.1 L621.4 421.5 L626.9 421.1 L622.5 431.3 L635.8 419.9 L630.0 419.4 Z"/>
<path class="mg" d="M675.2 416.4 L665.6 425.1 L669.8 424.8 L666.5 432.6 L676.6 423.9 L672.2 423.5 Z"/>
<path class="mg" d="M668.9 413.1 L659.9 421.4 L663.9 421.1 L660.7 428.4 L670.3 420.1 L666.1 419.8 Z"/>
<path class="mg" d="M672.9 413.2 L662.8 422.4 L667.2 422.0 L663.8 430.2 L674.4 421.0 L669.8 420.7 Z"/>
<path class="mb" d="M717.9 421.0 L707.8 430.2 L712.2 429.8 L708.8 438.0 L719.4 428.8 L714.8 428.5 Z"/>
<path class="mb" d="M611.1 278.2 L597.3 290.8 L603.3 290.4 L598.5 301.6 L613.1 289.0 L606.8 288.5 Z"/>
<path class="mg" d="M791.4 327.5 L780.6 337.2 L785.3 336.9 L781.6 345.6 L793.0 335.8 L788.0 335.4 Z"/>
<path class="mg" d="M794.1 330.3 L782.8 340.6 L787.7 340.2 L783.9 349.3 L795.8 339.0 L790.6 338.7 Z"/>
<path class="md" d="M869.6 325.3 L860.0 334.0 L864.2 333.7 L860.9 341.4 L871.0 332.7 L866.6 332.4 Z"/>
<path class="md" d="M864.3 326.0 L855.3 334.2 L859.3 333.9 L856.1 341.2 L865.7 333.0 L861.5 332.7 Z"/>
<path class="md" d="M866.8 327.4 L856.7 336.6 L861.1 336.2 L857.7 344.4 L868.3 335.2 L863.7 334.9 Z"/>
<path class="mb" d="M891.1 335.0 L878.0 347.0 L883.7 346.6 L879.2 357.2 L893.0 345.2 L887.0 344.8 Z"/>
<path class="mb" d="M890.3 334.3 L877.9 345.6 L883.3 345.2 L879.0 355.3 L892.1 343.9 L886.4 343.5 Z"/>
<path class="mb" d="M892.9 332.0 L879.1 344.6 L885.1 344.2 L880.3 355.4 L894.9 342.8 L888.6 342.3 Z"/>
<path class="mb" d="M939.4 335.5 L927.5 346.4 L932.7 346.0 L928.5 355.7 L941.1 344.8 L935.7 344.4 Z"/>
<path class="mb" d="M942.1 332.1 L929.6 343.5 L935.1 343.1 L930.7 353.3 L944.0 341.9 L938.2 341.4 Z"/>
<path class="mb" d="M946.7 345.4 L933.6 357.3 L939.3 356.9 L934.8 367.5 L948.6 355.6 L942.6 355.1 Z"/>
<path class="mb" d="M949.5 340.8 L935.7 353.4 L941.7 353.0 L936.9 364.2 L951.5 351.6 L945.2 351.1 Z"/>
<path class="mb" d="M949.1 360.9 L934.8 373.9 L941.0 373.5 L936.1 385.1 L951.2 372.0 L944.6 371.5 Z"/>
<path class="mb" d="M951.9 359.3 L936.9 373.0 L943.4 372.5 L938.2 384.7 L954.1 371.0 L947.2 370.5 Z"/>
<path class="md" d="M808.6 339.3 L797.8 349.1 L802.5 348.8 L798.8 357.5 L810.2 347.7 L805.2 347.3 Z"/>
<path class="md" d="M803.3 346.6 L793.2 355.9 L797.6 355.5 L794.1 363.8 L804.8 354.5 L800.2 354.2 Z"/>
<path class="md" d="M805.8 341.0 L794.5 351.3 L799.4 350.9 L795.6 360.0 L807.5 349.7 L802.3 349.4 Z"/>
<path class="mb" d="M813.0 345.9 L802.2 355.6 L806.9 355.3 L803.2 364.0 L814.6 354.2 L809.6 353.8 Z"/>
<path class="mb" d="M811.7 347.8 L800.4 358.1 L805.3 357.7 L801.5 366.8 L813.4 356.5 L808.2 356.2 Z"/>
<path class="mb" d="M794.8 356.4 L785.2 365.1 L789.4 364.8 L786.1 372.5 L796.2 363.8 L791.8 363.5 Z"/>
<path class="mb" d="M797.5 355.7 L787.4 364.9 L791.8 364.5 L788.4 372.7 L799.0 363.5 L794.4 363.2 Z"/>
<path class="mb" d="M835.0 342.4 L825.4 351.1 L829.6 350.8 L826.3 358.6 L836.4 349.9 L832.0 349.5 Z"/>
<path class="mb" d="M832.7 342.0 L822.6 351.2 L827.0 350.8 L823.6 359.0 L834.2 349.8 L829.6 349.5 Z"/>
<path class="mb" d="M840.2 352.7 L829.4 362.5 L834.1 362.1 L830.4 370.8 L841.8 361.0 L836.8 360.6 Z"/>
<path class="mb" d="M842.9 349.8 L831.6 360.1 L836.5 359.7 L832.7 368.8 L844.6 358.5 L839.4 358.2 Z"/>
<path class="mb" d="M858.6 339.1 L847.3 349.4 L852.2 349.0 L848.3 358.1 L860.2 347.8 L855.0 347.5 Z"/>
<path class="mb" d="M868.1 341.4 L858.5 350.1 L862.7 349.8 L859.4 357.5 L869.5 348.8 L865.1 348.5 Z"/>
<path class="mb" d="M871.3 340.1 L862.3 348.4 L866.3 348.0 L863.1 355.4 L872.7 347.1 L868.5 346.8 Z"/>
<path class="mb" d="M869.8 339.1 L859.7 348.3 L864.1 347.9 L860.7 356.1 L871.3 346.9 L866.7 346.6 Z"/>
<path class="md" d="M779.3 354.0 L769.7 362.7 L773.9 362.4 L770.6 370.1 L780.7 361.4 L776.3 361.1 Z"/>
<path class="md" d="M777.0 356.7 L766.9 365.9 L771.3 365.5 L767.9 373.7 L778.5 364.5 L773.9 364.2 Z"/>
<path class="mb" d="M862.0 360.5 L851.9 369.7 L856.3 369.3 L852.9 377.5 L863.5 368.3 L858.9 368.0 Z"/>
<path class="mb" d="M877.9 362.3 L868.3 371.0 L872.5 370.7 L869.2 378.4 L879.3 369.7 L874.9 369.4 Z"/>
<path class="mb" d="M875.6 361.5 L865.5 370.7 L869.9 370.3 L866.5 378.5 L877.1 369.3 L872.5 369.0 Z"/>
<path class="mb" d="M905.1 358.3 L890.1 372.0 L896.6 371.5 L891.4 383.7 L907.3 370.0 L900.4 369.5 Z"/>
<path class="md" d="M827.3 362.5 L816.0 372.8 L820.9 372.4 L817.1 381.5 L829.0 371.2 L823.8 370.9 Z"/>
<path class="md" d="M797.8 382.4 L785.9 393.3 L791.1 392.9 L787.0 402.5 L799.6 391.7 L794.1 391.3 Z"/>
<path class="md" d="M796.6 378.0 L784.0 389.4 L789.5 389.0 L785.2 399.2 L798.5 387.8 L792.7 387.3 Z"/>
<path class="mg" d="M813.5 374.5 L802.7 384.3 L807.4 383.9 L803.7 392.6 L815.1 382.9 L810.1 382.5 Z"/>
<path class="mg" d="M810.7 372.2 L799.4 382.5 L804.3 382.1 L800.5 391.3 L812.4 381.0 L807.2 380.6 Z"/>
<path class="mb" d="M780.2 388.3 L770.6 397.0 L774.8 396.7 L771.5 404.4 L781.6 395.7 L777.2 395.4 Z"/>
<path class="mb" d="M784.4 380.0 L775.4 388.3 L779.4 387.9 L776.2 395.3 L785.8 387.0 L781.6 386.7 Z"/>
<path class="mb" d="M782.9 384.0 L772.8 393.2 L777.2 392.8 L773.8 401.0 L784.4 391.8 L779.8 391.5 Z"/>
<path class="mg" d="M840.0 375.2 L828.7 385.5 L833.6 385.1 L829.8 394.2 L841.7 383.9 L836.5 383.6 Z"/>
<path class="mb" d="M851.2 378.0 L838.7 389.4 L844.2 389.0 L839.8 399.2 L853.1 387.8 L847.3 387.3 Z"/>
<path class="mb" d="M874.5 374.1 L859.0 388.2 L865.8 387.7 L860.4 400.3 L876.8 386.1 L869.7 385.6 Z"/>
<path class="mb" d="M876.3 376.7 L860.0 391.6 L867.2 391.1 L861.5 404.3 L878.8 389.4 L871.3 388.8 Z"/>
<path class="md" d="M823.9 389.7 L811.4 401.1 L816.9 400.7 L812.5 410.9 L825.8 399.5 L820.0 399.0 Z"/>
<path class="mb" d="M788.7 401.4 L776.2 412.8 L781.7 412.4 L777.3 422.6 L790.6 411.2 L784.8 410.7 Z"/>
<path class="mb" d="M859.6 398.3 L845.8 410.9 L851.8 410.5 L847.1 421.7 L861.7 409.1 L855.3 408.6 Z"/>
<path class="md" d="M877.9 414.3 L866.0 425.1 L871.2 424.7 L867.0 434.4 L879.6 423.5 L874.2 423.1 Z"/>
<path class="md" d="M876.6 412.2 L864.1 423.6 L869.6 423.2 L865.2 433.4 L878.5 422.0 L872.7 421.5 Z"/>
<path class="md" d="M809.1 413.9 L798.3 423.7 L803.0 423.3 L799.3 432.0 L810.7 422.2 L805.7 421.9 Z"/>
<path class="md" d="M810.8 412.2 L800.7 421.4 L805.1 421.1 L801.6 429.3 L812.3 420.0 L807.7 419.7 Z"/>
<path class="md" d="M807.8 416.2 L796.5 426.5 L801.4 426.1 L797.6 435.2 L809.5 424.9 L804.3 424.6 Z"/>
<path class="mb" d="M818.2 423.4 L808.6 432.1 L812.8 431.8 L809.5 439.5 L819.6 430.8 L815.2 430.5 Z"/>
<path class="mb" d="M820.9 419.2 L810.8 428.4 L815.2 428.0 L811.8 436.2 L822.4 427.0 L817.8 426.7 Z"/>
<path class="md" d="M782.4 424.0 L771.1 434.3 L776.0 433.9 L772.2 443.0 L784.1 432.7 L778.9 432.4 Z"/>
<path class="mb" d="M781.6 430.0 L770.8 439.8 L775.5 439.4 L771.8 448.1 L783.2 438.3 L778.2 438.0 Z"/>
<path class="mb" d="M784.3 431.8 L773.0 442.1 L777.9 441.7 L774.1 450.8 L786.0 440.5 L780.8 440.2 Z"/>
<path class="md" d="M792.8 432.3 L783.3 441.0 L787.4 440.7 L784.1 448.4 L794.2 439.7 L789.8 439.4 Z"/>
<path class="md" d="M795.5 432.8 L785.5 442.0 L789.9 441.6 L786.4 449.8 L797.0 440.6 L792.4 440.3 Z"/>
<path class="mb" d="M850.5 431.6 L839.7 441.4 L844.4 441.0 L840.7 449.7 L852.1 439.9 L847.1 439.6 Z"/>
<path class="mb" d="M853.7 429.9 L842.4 440.2 L847.3 439.8 L843.5 448.9 L855.4 438.6 L850.2 438.3 Z"/>
<path class="mb" d="M900.3 421.2 L888.4 432.0 L893.6 431.6 L889.4 441.3 L902.0 430.4 L896.6 430.0 Z"/>
<path class="mb" d="M902.0 423.9 L889.5 435.3 L895.0 434.9 L890.6 445.1 L903.9 433.7 L898.1 433.2 Z"/>
<path class="md" d="M915.7 422.9 L903.2 434.3 L908.7 433.9 L904.3 444.1 L917.6 432.7 L911.8 432.2 Z"/>
<path class="mb" d="M875.9 434.4 L862.8 446.3 L868.5 445.9 L864.0 456.5 L877.8 444.5 L871.8 444.1 Z"/>
<path class="mb" d="M876.6 436.6 L864.2 447.9 L869.6 447.5 L865.3 457.6 L878.4 446.3 L872.7 445.8 Z"/>
<path class="mb" d="M879.2 437.4 L865.4 450.0 L871.4 449.6 L866.6 460.8 L881.2 448.2 L874.9 447.7 Z"/>
<path class="md" d="M863.0 448.3 L850.5 459.7 L856.0 459.3 L851.6 469.5 L864.9 458.1 L859.1 457.6 Z"/>
<path class="md" d="M799.2 445.8 L787.3 456.6 L792.5 456.2 L788.3 465.9 L800.9 455.0 L795.5 454.6 Z"/>
<path class="md" d="M803.9 445.0 L792.6 455.3 L797.5 455.0 L793.7 464.1 L805.6 453.8 L800.4 453.4 Z"/>
<path class="md" d="M802.4 442.4 L789.9 453.8 L795.4 453.4 L791.0 463.6 L804.3 452.2 L798.5 451.7 Z"/>
<path class="mg" d="M806.3 451.4 L796.2 460.6 L800.6 460.2 L797.2 468.4 L807.8 459.2 L803.2 458.9 Z"/>
<path class="mb" d="M786.3 451.4 L775.0 461.7 L779.9 461.3 L776.1 470.4 L788.0 460.1 L782.8 459.8 Z"/>
<path class="mb" d="M821.2 454.5 L809.3 465.4 L814.5 465.0 L810.3 474.6 L822.9 463.8 L817.5 463.4 Z"/>
<path class="mb" d="M823.9 452.2 L811.4 463.6 L816.9 463.2 L812.5 473.4 L825.8 462.0 L820.0 461.5 Z"/>
<path class="mb" d="M767.5 448.7 L757.9 457.4 L762.1 457.1 L758.8 464.8 L768.9 456.1 L764.5 455.8 Z"/>
<path class="mb" d="M770.2 446.5 L760.1 455.7 L764.5 455.3 L761.1 463.5 L771.7 454.3 L767.1 454.0 Z"/>
<path class="mg" d="M925.3 443.7 L917.8 450.6 L921.1 450.4 L918.5 456.5 L926.4 449.6 L923.0 449.3 Z"/>
<path class="md" d="M930.7 453.0 L919.9 462.8 L924.6 462.4 L920.9 471.1 L932.3 461.3 L927.3 460.9 Z"/>
<path class="md" d="M930.9 452.7 L920.8 461.9 L925.2 461.6 L921.7 469.8 L932.4 460.6 L927.8 460.2 Z"/>
<path class="md" d="M927.9 449.4 L916.6 459.7 L921.5 459.3 L917.7 468.4 L929.6 458.1 L924.4 457.8 Z"/>
<path class="md" d="M902.0 452.2 L889.5 463.6 L895.0 463.2 L890.6 473.4 L903.9 462.0 L898.1 461.5 Z"/>
<path class="mo" d="M907.1 461.7 L896.3 471.4 L901.0 471.1 L897.3 479.8 L908.7 470.0 L903.7 469.6 Z"/>
<path class="mo" d="M907.8 463.4 L897.7 472.7 L902.1 472.3 L898.6 480.6 L909.3 471.3 L904.7 470.9 Z"/>
<path class="mo" d="M910.3 459.2 L899.0 469.5 L903.9 469.1 L900.1 478.2 L912.0 467.9 L906.8 467.6 Z"/>
<path class="mb" d="M940.6 457.2 L929.3 467.5 L934.2 467.1 L930.4 476.2 L942.3 465.9 L937.1 465.6 Z"/>
<path class="md" d="M893.2 466.0 L883.1 475.2 L887.5 474.8 L884.1 483.0 L894.7 473.8 L890.1 473.5 Z"/>
<path class="mb" d="M848.3 462.1 L838.2 471.3 L842.6 470.9 L839.2 479.1 L849.8 469.9 L845.2 469.6 Z"/>
<path class="md" d="M793.6 466.0 L783.5 475.2 L787.9 474.8 L784.5 483.0 L795.1 473.8 L790.5 473.5 Z"/>
<path class="mb" d="M770.4 462.8 L760.8 471.5 L765.0 471.2 L761.7 478.9 L771.8 470.2 L767.4 469.9 Z"/>
<path class="mb" d="M772.1 466.0 L762.0 475.2 L766.4 474.8 L763.0 483.0 L773.6 473.8 L769.0 473.5 Z"/>
<path class="mb" d="M870.3 463.1 L859.0 473.4 L863.9 473.0 L860.1 482.1 L872.0 471.8 L866.8 471.5 Z"/>
<path class="mb" d="M598.7 448.8 L588.6 458.0 L593.0 457.6 L589.6 465.8 L600.2 456.6 L595.6 456.3 Z"/>
<path class="mg" d="M605.4 456.5 L592.3 468.5 L598.0 468.0 L593.5 478.6 L607.3 466.7 L601.3 466.2 Z"/>
<path class="mg" d="M603.2 455.4 L589.4 468.0 L595.4 467.6 L590.6 478.8 L605.2 466.2 L598.9 465.7 Z"/>
<path class="mg" d="M617.3 457.6 L607.2 466.8 L611.6 466.4 L608.2 474.6 L618.8 465.4 L614.2 465.1 Z"/>
<path class="mb" d="M628.5 443.9 L617.2 454.2 L622.1 453.8 L618.3 462.9 L630.2 452.6 L625.0 452.3 Z"/>
<path class="md" d="M690.5 441.9 L678.0 453.3 L683.5 452.9 L679.1 463.1 L692.4 451.7 L686.6 451.2 Z"/>
<path class="mb" d="M744.5 429.4 L734.9 438.1 L739.1 437.8 L735.8 445.5 L745.9 436.8 L741.5 436.5 Z"/>
<path class="mb" d="M746.2 429.3 L736.1 438.5 L740.5 438.1 L737.1 446.3 L747.7 437.1 L743.1 436.8 Z"/>
<path class="mb" d="M727.4 449.5 L715.5 460.4 L720.7 460.0 L716.5 469.7 L729.1 458.8 L723.7 458.4 Z"/>
<path class="mb" d="M728.1 448.5 L716.8 458.8 L721.7 458.4 L717.9 467.5 L729.8 457.2 L724.6 456.8 Z"/>
<path class="mb" d="M730.6 445.8 L718.1 457.2 L723.6 456.8 L719.2 467.0 L732.5 455.6 L726.7 455.1 Z"/>
<path class="mb" d="M704.1 457.8 L692.2 468.7 L697.4 468.3 L693.2 478.0 L705.8 467.1 L700.4 466.7 Z"/>
<path class="mb" d="M698.8 462.0 L687.5 472.3 L692.4 471.9 L688.6 481.1 L700.5 470.8 L695.3 470.4 Z"/>
<path class="mb" d="M701.3 457.5 L688.8 468.9 L694.3 468.5 L689.9 478.7 L703.2 467.3 L697.4 466.8 Z"/>
<path class="md" d="M711.3 462.8 L701.7 471.5 L705.9 471.2 L702.6 478.9 L712.7 470.2 L708.3 469.9 Z"/>
<path class="md" d="M710.0 464.5 L699.9 473.7 L704.3 473.3 L700.9 481.5 L711.5 472.3 L706.9 472.0 Z"/>
<path class="mb" d="M754.5 455.7 L743.2 466.0 L748.1 465.6 L744.3 474.7 L756.2 464.4 L751.0 464.1 Z"/>
<path class="mb" d="M771.9 446.9 L762.3 455.6 L766.5 455.2 L763.2 463.0 L773.3 454.3 L768.9 453.9 Z"/>
<path class="mb" d="M769.6 449.8 L759.5 459.0 L763.9 458.6 L760.5 466.8 L771.1 457.6 L766.5 457.3 Z"/>
<path class="md" d="M743.4 475.9 L728.4 489.6 L734.9 489.1 L729.7 501.3 L745.6 487.6 L738.7 487.1 Z"/>
<path class="mg" d="M742.6 492.2 L733.0 500.9 L737.2 500.6 L733.9 508.3 L744.0 499.6 L739.6 499.3 Z"/>
<path class="mg" d="M744.3 490.8 L734.2 500.0 L738.6 499.6 L735.2 507.8 L745.8 498.6 L741.2 498.3 Z"/>
<path class="mb" d="M770.1 469.3 L758.8 479.6 L763.7 479.2 L759.9 488.3 L771.8 478.0 L766.6 477.7 Z"/>
<path class="mb" d="M639.6 481.1 L626.5 493.0 L632.2 492.6 L627.7 503.2 L641.5 491.3 L635.5 490.8 Z"/>
<path class="mb" d="M634.3 484.2 L621.9 495.6 L627.3 495.1 L623.0 505.2 L636.1 493.9 L630.4 493.5 Z"/>
<path class="mb" d="M638.4 481.8 L624.6 494.4 L630.6 494.0 L625.8 505.2 L640.4 492.6 L634.1 492.1 Z"/>
<path class="mb" d="M651.8 487.7 L642.2 496.4 L646.4 496.1 L643.1 503.8 L653.2 495.1 L648.8 494.8 Z"/>
<path class="mb" d="M645.5 496.4 L636.5 504.6 L640.5 504.3 L637.3 511.7 L646.9 503.4 L642.7 503.1 Z"/>
<path class="mb" d="M649.5 490.8 L639.4 500.0 L643.8 499.6 L640.4 507.8 L651.0 498.6 L646.4 498.3 Z"/>
<path class="mb" d="M676.7 488.7 L663.6 500.7 L669.3 500.2 L664.8 510.9 L678.6 498.9 L672.6 498.5 Z"/>
<path class="mb" d="M671.4 490.0 L659.0 501.3 L664.4 500.9 L660.1 511.0 L673.2 499.6 L667.5 499.2 Z"/>
<path class="mb" d="M675.5 486.7 L661.7 499.3 L667.7 498.9 L662.9 510.1 L677.5 497.5 L671.2 497.0 Z"/>
<path class="mb" d="M711.4 482.2 L699.5 493.0 L704.7 492.6 L700.5 502.3 L713.1 491.4 L707.7 491.0 Z"/>
<path class="mb" d="M709.1 481.9 L696.6 493.3 L702.1 492.9 L697.7 503.1 L711.0 491.7 L705.2 491.2 Z"/>
<path class="mg" d="M705.9 505.5 L696.3 514.2 L700.5 513.9 L697.2 521.7 L707.3 512.9 L702.9 512.6 Z"/>
<path class="mg" d="M706.6 512.7 L697.6 521.0 L701.6 520.7 L698.4 528.0 L708.0 519.8 L703.8 519.4 Z"/>
<path class="mg" d="M709.1 507.5 L699.0 516.7 L703.4 516.3 L700.0 524.5 L710.6 515.3 L706.0 515.0 Z"/>
<path class="mg" d="M711.4 514.3 L701.8 523.0 L706.0 522.6 L702.7 530.4 L712.8 521.7 L708.4 521.3 Z"/>
<path class="mg" d="M712.1 523.0 L703.1 531.3 L707.1 530.9 L703.9 538.3 L713.5 530.0 L709.3 529.7 Z"/>
<path class="mg" d="M709.1 517.2 L699.0 526.4 L703.4 526.0 L700.0 534.2 L710.6 525.0 L706.0 524.7 Z"/>
<path class="mg" d="M735.8 500.5 L726.2 509.2 L730.4 508.9 L727.1 516.7 L737.2 508.0 L732.8 507.6 Z"/>
<path class="mg" d="M734.5 503.5 L724.4 512.7 L728.8 512.3 L725.4 520.5 L736.0 511.3 L731.4 511.0 Z"/>
<path class="md" d="M765.6 495.3 L753.7 506.2 L758.9 505.8 L754.7 515.5 L767.3 504.6 L761.9 504.2 Z"/>
<path class="md" d="M758.8 492.0 L747.5 502.3 L752.4 501.9 L748.6 511.1 L760.5 500.8 L755.3 500.4 Z"/>
<path class="md" d="M762.8 494.6 L750.3 506.0 L755.8 505.6 L751.4 515.8 L764.7 504.4 L758.9 503.9 Z"/>
<path class="md" d="M740.3 511.2 L727.8 522.6 L733.3 522.2 L728.9 532.4 L742.2 521.0 L736.4 520.5 Z"/>
<path class="mb" d="M675.5 510.1 L661.7 522.7 L667.7 522.3 L662.9 533.5 L677.5 520.9 L671.2 520.4 Z"/>
<path class="mg" d="M640.2 523.0 L628.9 533.3 L633.8 532.9 L630.0 542.0 L641.9 531.7 L636.7 531.4 Z"/>
<path class="mb" d="M645.6 519.2 L635.5 528.4 L639.9 528.0 L636.5 536.2 L647.1 527.0 L642.5 526.7 Z"/>
<path class="mb" d="M675.3 536.3 L663.4 547.2 L668.6 546.8 L664.4 556.4 L677.0 545.5 L671.6 545.1 Z"/>
<path class="mb" d="M673.0 536.6 L660.5 548.0 L666.0 547.6 L661.6 557.8 L674.9 546.4 L669.1 545.9 Z"/>
<path class="md" d="M675.2 544.5 L665.6 553.2 L669.8 552.9 L666.5 560.6 L676.6 551.9 L672.2 551.6 Z"/>
<path class="md" d="M672.9 542.6 L662.8 551.8 L667.2 551.4 L663.8 559.6 L674.4 550.4 L669.8 550.1 Z"/>
<path class="mb" d="M713.9 538.0 L699.6 551.1 L705.8 550.6 L700.9 562.2 L716.0 549.2 L709.4 548.7 Z"/>
<path class="mb" d="M711.2 540.3 L696.2 554.0 L702.7 553.5 L697.5 565.7 L713.4 552.0 L706.5 551.5 Z"/>
<path class="mb" d="M758.1 543.9 L748.5 552.6 L752.7 552.3 L749.4 560.0 L759.5 551.3 L755.1 551.0 Z"/>
<path class="mb" d="M760.8 546.5 L750.7 555.7 L755.1 555.3 L751.7 563.5 L762.3 554.3 L757.7 554.0 Z"/>
<path class="md" d="M770.4 549.8 L757.3 561.8 L763.0 561.3 L758.5 572.0 L772.3 560.0 L766.3 559.6 Z"/>
<path class="md" d="M773.2 547.2 L759.4 559.8 L765.4 559.4 L760.6 570.6 L775.2 558.0 L768.9 557.5 Z"/>
<path class="mb" d="M730.0 524.2 L721.2 532.2 L725.0 531.9 L722.0 539.0 L731.3 531.0 L727.3 530.7 Z"/>
<path class="md" d="M773.4 516.4 L762.6 526.2 L767.3 525.8 L763.6 534.5 L775.0 524.7 L770.0 524.4 Z"/>
<path class="md" d="M768.1 512.7 L758.0 522.0 L762.4 521.6 L758.9 529.9 L769.6 520.6 L765.0 520.3 Z"/>
<path class="md" d="M772.1 514.2 L760.8 524.5 L765.7 524.1 L761.9 533.3 L773.8 523.0 L768.6 522.6 Z"/>
<path class="mb" d="M712.7 573.4 L704.4 581.1 L708.0 580.8 L705.2 587.5 L714.0 579.9 L710.2 579.6 Z"/>
<path class="mb" d="M708.1 568.4 L700.2 575.6 L703.6 575.4 L700.9 581.8 L709.2 574.6 L705.6 574.3 Z"/>
<path class="mb" d="M710.4 569.1 L701.7 577.1 L705.5 576.8 L702.5 583.9 L711.7 575.9 L707.7 575.6 Z"/>
<path class="md" d="M780.7 478.4 L769.9 488.2 L774.6 487.8 L770.9 496.5 L782.3 486.7 L777.3 486.3 Z"/>
<path class="md" d="M783.4 475.1 L772.1 485.4 L777.0 485.0 L773.2 494.1 L785.1 483.8 L779.9 483.5 Z"/>
<path class="md" d="M792.9 471.4 L783.3 480.1 L787.5 479.8 L784.2 487.5 L794.3 478.8 L789.9 478.5 Z"/>
<path class="md" d="M794.6 468.3 L784.5 477.5 L788.9 477.1 L785.5 485.3 L796.1 476.1 L791.5 475.8 Z"/>
<path class="mb" d="M795.4 477.5 L784.6 487.3 L789.3 487.0 L785.6 495.7 L797.0 485.9 L792.0 485.5 Z"/>
<path class="mb" d="M794.1 479.1 L782.8 489.4 L787.7 489.0 L783.9 498.1 L795.8 487.8 L790.6 487.5 Z"/>
<path class="mb" d="M767.5 469.3 L756.7 479.0 L761.4 478.7 L757.7 487.4 L769.1 477.6 L764.1 477.2 Z"/>
<path class="mb" d="M770.7 470.3 L759.4 480.6 L764.3 480.2 L760.5 489.3 L772.4 479.0 L767.2 478.7 Z"/>
<path class="mb" d="M825.3 477.1 L814.0 487.4 L818.9 487.0 L815.1 496.1 L827.0 485.8 L821.8 485.5 Z"/>
<path class="md" d="M833.8 482.7 L818.8 496.4 L825.3 495.9 L820.1 508.1 L836.0 494.4 L829.1 493.9 Z"/>
<path class="mb" d="M844.6 470.2 L832.7 481.1 L837.9 480.7 L833.7 490.4 L846.3 479.5 L840.9 479.1 Z"/>
<path class="mb" d="M846.3 467.2 L833.8 478.6 L839.3 478.2 L834.9 488.4 L848.2 477.0 L842.4 476.5 Z"/>
<path class="mb" d="M868.8 468.2 L856.3 479.6 L861.8 479.2 L857.4 489.4 L870.7 478.0 L864.9 477.5 Z"/>
<path class="md" d="M888.0 472.0 L874.2 484.6 L880.2 484.2 L875.4 495.4 L890.0 482.8 L883.7 482.3 Z"/>
<path class="md" d="M898.1 470.1 L885.6 481.5 L891.1 481.1 L886.7 491.3 L900.0 479.9 L894.2 479.4 Z"/>
<path class="mg" d="M914.2 476.1 L902.9 486.4 L907.8 486.0 L904.0 495.1 L915.9 484.8 L910.7 484.5 Z"/>
<path class="md" d="M927.4 475.0 L914.9 486.4 L920.4 486.0 L916.0 496.2 L929.3 484.8 L923.5 484.3 Z"/>
<path class="md" d="M936.1 483.6 L924.2 494.5 L929.4 494.1 L925.2 503.8 L937.8 492.9 L932.4 492.5 Z"/>
<path class="md" d="M934.8 486.3 L923.5 496.6 L928.4 496.2 L924.6 505.4 L936.5 495.1 L931.3 494.7 Z"/>
<path class="md" d="M933.3 483.8 L920.8 495.2 L926.3 494.8 L921.9 505.0 L935.2 493.6 L929.4 493.1 Z"/>
<path class="mb" d="M935.0 496.4 L924.2 506.2 L928.9 505.9 L925.2 514.6 L936.6 504.8 L931.6 504.4 Z"/>
<path class="mb" d="M936.7 492.7 L925.4 503.0 L930.3 502.6 L926.5 511.7 L938.4 501.4 L933.2 501.1 Z"/>
<path class="md" d="M868.5 484.5 L852.2 499.4 L859.4 498.9 L853.7 512.1 L871.0 497.2 L863.5 496.6 Z"/>
<path class="mg" d="M878.0 492.9 L866.1 503.8 L871.3 503.4 L867.1 513.0 L879.7 502.1 L874.3 501.7 Z"/>
<path class="mg" d="M875.7 493.6 L863.2 505.0 L868.7 504.6 L864.3 514.8 L877.6 503.4 L871.8 502.9 Z"/>
<path class="md" d="M910.2 495.0 L897.1 507.0 L902.8 506.6 L898.3 517.2 L912.1 505.2 L906.1 504.8 Z"/>
<path class="md" d="M907.5 492.5 L893.7 505.1 L899.7 504.7 L894.9 515.9 L909.5 503.3 L903.2 502.8 Z"/>
<path class="md" d="M892.7 496.6 L881.4 506.9 L886.3 506.5 L882.5 515.6 L894.4 505.3 L889.2 505.0 Z"/>
<path class="mb" d="M889.6 487.7 L880.0 496.4 L884.2 496.0 L880.9 503.8 L891.0 495.1 L886.6 494.7 Z"/>
<path class="mb" d="M888.3 488.8 L878.2 498.0 L882.6 497.6 L879.2 505.8 L889.8 496.6 L885.2 496.3 Z"/>
<path class="md" d="M850.9 505.0 L834.6 519.9 L841.8 519.4 L836.1 532.6 L853.4 517.7 L845.9 517.1 Z"/>
<path class="mb" d="M873.5 511.9 L860.4 523.8 L866.1 523.4 L861.6 534.0 L875.4 522.1 L869.4 521.6 Z"/>
<path class="mb" d="M872.3 510.1 L858.5 522.7 L864.5 522.3 L859.7 533.5 L874.3 520.9 L868.0 520.4 Z"/>
<path class="mb" d="M879.6 509.2 L871.3 516.8 L874.9 516.5 L872.1 523.3 L880.9 515.7 L877.1 515.4 Z"/>
<path class="mb" d="M886.0 506.8 L878.1 514.0 L881.5 513.8 L878.8 520.2 L887.1 513.0 L883.5 512.7 Z"/>
<path class="mb" d="M882.8 505.6 L874.1 513.6 L877.9 513.3 L874.9 520.4 L884.1 512.4 L880.1 512.1 Z"/>
<path class="mb" d="M801.6 502.9 L789.7 513.8 L794.9 513.4 L790.7 523.0 L803.3 512.2 L797.9 511.8 Z"/>
<path class="mb" d="M804.3 498.4 L791.8 509.8 L797.3 509.4 L792.9 519.6 L806.2 508.2 L800.4 507.7 Z"/>
<path class="mb" d="M783.2 505.3 L773.6 514.0 L777.8 513.7 L774.5 521.4 L784.6 512.7 L780.2 512.4 Z"/>
<path class="mb" d="M781.9 504.5 L771.8 513.7 L776.2 513.3 L772.8 521.5 L783.4 512.3 L778.8 512.0 Z"/>
<path class="md" d="M776.8 510.5 L766.0 520.3 L770.7 519.9 L767.0 528.6 L778.4 518.8 L773.4 518.4 Z"/>
<path class="md" d="M775.5 511.3 L764.2 521.6 L769.1 521.2 L765.3 530.3 L777.2 520.0 L772.0 519.7 Z"/>
<path class="md" d="M824.7 523.3 L811.6 535.2 L817.3 534.8 L812.8 545.4 L826.6 533.5 L820.6 533.0 Z"/>
<path class="md" d="M824.9 528.8 L812.5 540.1 L817.9 539.7 L813.6 549.8 L826.7 538.4 L821.0 538.0 Z"/>
<path class="md" d="M823.5 523.7 L809.7 536.3 L815.7 535.9 L810.9 547.1 L825.5 534.5 L819.2 534.0 Z"/>
<path class="mb" d="M823.4 511.3 L812.1 521.6 L817.0 521.2 L813.2 530.3 L825.1 520.0 L819.9 519.7 Z"/>
<path class="mb" d="M838.4 531.2 L825.3 543.2 L831.0 542.7 L826.5 553.3 L840.3 541.4 L834.3 540.9 Z"/>
<path class="mb" d="M836.2 528.6 L822.4 541.2 L828.4 540.8 L823.6 552.0 L838.2 539.4 L831.9 538.9 Z"/>
<path class="mb" d="M799.2 514.3 L788.4 524.1 L793.1 523.8 L789.4 532.5 L800.8 522.7 L795.8 522.3 Z"/>
<path class="mb" d="M801.9 515.2 L790.6 525.5 L795.5 525.1 L791.7 534.2 L803.6 523.9 L798.4 523.6 Z"/>
<path class="md" d="M796.3 527.9 L785.5 537.7 L790.2 537.4 L786.5 546.1 L797.9 536.3 L792.9 535.9 Z"/>
<path class="md" d="M795.0 524.1 L784.9 533.3 L789.3 533.0 L785.8 541.2 L796.5 532.0 L791.9 531.6 Z"/>
<path class="md" d="M799.0 526.9 L787.7 537.2 L792.6 536.8 L788.8 545.9 L800.7 535.6 L795.5 535.3 Z"/>
<path class="md" d="M777.1 545.2 L762.1 558.9 L768.6 558.4 L763.4 570.6 L779.3 556.9 L772.4 556.4 Z"/>
<path class="mg" d="M797.5 539.5 L785.0 550.9 L790.5 550.5 L786.1 560.7 L799.4 549.3 L793.6 548.8 Z"/>
<path class="mb" d="M804.9 548.1 L791.1 560.7 L797.1 560.3 L792.3 571.5 L806.9 558.9 L800.6 558.4 Z"/>
<path class="mb" d="M811.4 553.0 L801.8 561.7 L806.0 561.4 L802.7 569.1 L812.8 560.4 L808.4 560.1 Z"/>
<path class="mb" d="M814.1 549.4 L804.0 558.6 L808.4 558.2 L805.0 566.4 L815.6 557.2 L811.0 556.9 Z"/>
<path class="mg" d="M781.7 559.2 L772.1 567.9 L776.3 567.6 L773.0 575.3 L783.1 566.6 L778.7 566.3 Z"/>
<path class="mg" d="M778.9 559.2 L768.8 568.4 L773.2 568.0 L769.8 576.2 L780.4 567.0 L775.8 566.7 Z"/>
<path class="mb" d="M817.5 562.1 L806.2 572.4 L811.1 572.0 L807.3 581.1 L819.2 570.8 L814.0 570.5 Z"/>
<path class="md" d="M789.8 576.4 L774.8 590.1 L781.3 589.6 L776.1 601.8 L792.0 588.1 L785.1 587.6 Z"/>
<path class="mg" d="M795.4 570.0 L787.9 576.9 L791.2 576.7 L788.6 582.8 L796.5 575.9 L793.1 575.6 Z"/>
<path class="mb" d="M799.7 584.3 L787.8 595.2 L793.0 594.8 L788.8 604.5 L801.4 593.6 L796.0 593.2 Z"/>
<path class="mb" d="M804.4 590.1 L793.1 600.4 L798.0 600.1 L794.2 609.2 L806.1 598.9 L800.9 598.5 Z"/>
<path class="mb" d="M801.4 584.4 L788.9 595.8 L794.4 595.4 L790.0 605.6 L803.3 594.2 L797.5 593.7 Z"/>
<path class="mb" d="M776.3 574.4 L766.7 583.1 L770.9 582.8 L767.6 590.5 L777.7 581.8 L773.3 581.5 Z"/>
<path class="mb" d="M778.0 574.8 L767.9 584.0 L772.3 583.6 L768.9 591.8 L779.5 582.6 L774.9 582.3 Z"/>
<path class="mb" d="M766.3 572.8 L756.2 582.0 L760.6 581.6 L757.2 589.8 L767.8 580.6 L763.2 580.3 Z"/>
<path class="md" d="M784.3 593.3 L773.0 603.6 L777.9 603.2 L774.1 612.3 L786.0 602.0 L780.8 601.7 Z"/>
<path class="mb" d="M783.2 605.2 L774.5 613.2 L778.3 612.9 L775.3 620.0 L784.5 612.0 L780.5 611.7 Z"/>
<path class="mb" d="M710.4 571.7 L695.4 585.4 L701.9 584.9 L696.7 597.1 L712.6 583.4 L705.7 582.9 Z"/>
<path class="md" d="M694.9 579.0 L685.3 587.7 L689.5 587.4 L686.2 595.1 L696.3 586.4 L691.9 586.1 Z"/>
<path class="md" d="M696.6 580.8 L686.5 590.0 L690.9 589.6 L687.5 597.8 L698.1 588.6 L693.5 588.3 Z"/>
<path class="mg" d="M700.3 586.9 L690.7 595.6 L694.9 595.3 L691.6 603.0 L701.7 594.3 L697.3 594.0 Z"/>
<path class="mg" d="M697.5 589.6 L687.4 598.8 L691.8 598.4 L688.4 606.6 L699.0 597.4 L694.4 597.1 Z"/>
<path class="mg" d="M691.7 599.4 L681.6 608.6 L686.0 608.2 L682.6 616.4 L693.2 607.2 L688.6 606.9 Z"/>
<path class="mb" d="M701.4 592.5 L691.3 601.7 L695.7 601.3 L692.3 609.5 L702.9 600.3 L698.3 600.0 Z"/>
<path class="mb" d="M692.2 609.1 L680.9 619.4 L685.8 619.0 L682.0 628.1 L693.9 617.8 L688.7 617.5 Z"/>
<path class="mb" d="M742.5 583.6 L730.0 595.0 L735.5 594.6 L731.1 604.8 L744.4 593.4 L738.6 592.9 Z"/>
<path class="mb" d="M741.8 600.6 L729.9 611.5 L735.1 611.1 L730.9 620.8 L743.5 609.9 L738.1 609.5 Z"/>
<path class="mb" d="M745.0 602.5 L733.7 612.8 L738.6 612.4 L734.8 621.6 L746.7 611.3 L741.5 610.9 Z"/>
<path class="mb" d="M743.5 604.1 L731.0 615.5 L736.5 615.1 L732.1 625.3 L745.4 613.9 L739.6 613.4 Z"/>
<path class="mb" d="M730.3 622.8 L719.0 633.1 L723.9 632.7 L720.1 641.8 L732.0 631.5 L726.8 631.2 Z"/>
<path class="mb" d="M708.4 625.4 L693.4 639.1 L699.9 638.6 L694.7 650.8 L710.6 637.1 L703.7 636.6 Z"/>
<path class="md" d="M757.9 625.1 L747.1 634.9 L751.8 634.6 L748.1 643.3 L759.5 633.5 L754.5 633.1 Z"/>
<path class="md" d="M756.6 623.7 L745.3 634.0 L750.2 633.6 L746.4 642.7 L758.3 632.4 L753.1 632.1 Z"/>
<path class="mb" d="M791.3 631.4 L778.8 642.8 L784.3 642.4 L779.9 652.6 L793.2 641.2 L787.4 640.7 Z"/>
<path class="md" d="M760.3 580.9 L750.7 589.6 L754.9 589.3 L751.6 597.1 L761.7 588.4 L757.3 588.0 Z"/>
<path class="md" d="M762.0 583.7 L751.9 592.9 L756.3 592.5 L752.9 600.7 L763.5 591.5 L758.9 591.2 Z"/>
<path class="mb" d="M767.6 571.0 L758.0 579.7 L762.2 579.4 L758.9 587.1 L769.0 578.4 L764.6 578.1 Z"/>
<path class="mb" d="M770.8 573.0 L760.7 582.2 L765.1 581.8 L761.7 590.0 L772.3 580.8 L767.7 580.5 Z"/>
<path class="md" d="M785.2 576.1 L770.9 589.2 L777.1 588.7 L772.2 600.3 L787.3 587.2 L780.7 586.8 Z"/>
<path class="md" d="M788.5 579.5 L773.5 593.2 L780.0 592.7 L774.8 604.9 L790.7 591.2 L783.8 590.7 Z"/>
<path class="md" d="M782.5 596.5 L772.4 605.7 L776.8 605.3 L773.4 613.5 L784.0 604.3 L779.4 604.0 Z"/>
<path class="mb" d="M801.1 582.6 L788.6 594.0 L794.1 593.6 L789.7 603.8 L803.0 592.4 L797.2 591.9 Z"/>
<path class="mb" d="M813.5 563.8 L802.7 573.6 L807.4 573.2 L803.7 581.9 L815.1 572.1 L810.1 571.8 Z"/>
<path class="mb" d="M816.2 562.2 L804.9 572.5 L809.8 572.1 L806.0 581.2 L817.9 570.9 L812.7 570.6 Z"/>
<path class="mb" d="M783.8 605.3 L775.1 613.3 L778.9 613.0 L775.9 620.1 L785.1 612.1 L781.1 611.8 Z"/>
<path class="mg" d="M775.9 562.1 L768.8 568.7 L771.9 568.4 L769.4 574.2 L777.0 567.7 L773.7 567.5 Z"/>
<path class="mg" d="M774.6 561.4 L767.1 568.3 L770.4 568.1 L767.8 574.2 L775.7 567.3 L772.3 567.0 Z"/>
<path class="md" d="M776.4 558.5 L768.1 566.1 L771.7 565.8 L768.9 572.6 L777.7 565.0 L773.9 564.7 Z"/>
<path class="md" d="M770.3 552.8 L762.4 560.0 L765.8 559.7 L763.1 566.1 L771.4 558.9 L767.8 558.7 Z"/>
<path class="md" d="M774.1 556.5 L765.4 564.5 L769.2 564.2 L766.2 571.3 L775.4 563.3 L771.4 563.0 Z"/>
<path class="mg" d="M800.8 570.7 L793.7 577.3 L796.8 577.0 L794.3 582.8 L801.9 576.3 L798.6 576.1 Z"/>
<path class="mg" d="M798.0 569.2 L790.5 576.1 L793.8 575.9 L791.2 582.0 L799.1 575.1 L795.7 574.8 Z"/>
<path class="mb" d="M805.3 557.2 L795.7 565.9 L799.9 565.6 L796.6 573.3 L806.7 564.6 L802.3 564.3 Z"/>
<path class="mb" d="M800.0 553.5 L791.0 561.8 L795.0 561.5 L791.8 568.8 L801.4 560.6 L797.2 560.3 Z"/>
<path class="mb" d="M804.0 555.4 L793.9 564.6 L798.3 564.2 L794.9 572.4 L805.5 563.2 L800.9 562.9 Z"/>
<path class="mb" d="M711.5 655.2 L699.6 666.1 L704.8 665.6 L700.6 675.3 L713.2 664.4 L707.8 664.0 Z"/>
<path class="mb" d="M710.2 655.8 L698.9 666.1 L703.8 665.7 L700.0 674.9 L711.9 664.6 L706.7 664.2 Z"/>
<path class="mb" d="M714.2 652.9 L701.7 664.3 L707.2 663.9 L702.8 674.1 L716.1 662.7 L710.3 662.2 Z"/>
<path class="mg" d="M720.2 667.2 L710.6 675.9 L714.8 675.5 L711.5 683.3 L721.6 674.6 L717.2 674.2 Z"/>
<path class="mg" d="M722.9 664.8 L712.8 674.0 L717.2 673.6 L713.8 681.8 L724.4 672.6 L719.8 672.3 Z"/>
<path class="mb" d="M730.3 650.1 L719.0 660.4 L723.9 660.0 L720.1 669.1 L732.0 658.8 L726.8 658.5 Z"/>
<path class="md" d="M740.4 655.8 L729.6 665.6 L734.3 665.3 L730.6 674.0 L742.0 664.2 L737.0 663.8 Z"/>
<path class="md" d="M739.1 656.9 L727.8 667.2 L732.7 666.8 L728.9 675.9 L740.8 665.6 L735.6 665.3 Z"/>
<path class="mb" d="M734.1 673.6 L725.4 681.6 L729.2 681.3 L726.2 688.4 L735.4 680.4 L731.4 680.1 Z"/>
<path class="mg" d="M768.7 644.8 L757.9 654.5 L762.6 654.2 L758.9 662.9 L770.3 653.1 L765.3 652.7 Z"/>
<path class="mg" d="M767.4 646.2 L756.1 656.5 L761.0 656.1 L757.2 665.2 L769.1 654.9 L763.9 654.6 Z"/>
<path class="mg" d="M748.7 669.8 L740.0 677.8 L743.8 677.5 L740.8 684.6 L750.0 676.6 L746.0 676.3 Z"/>
<path class="md" d="M756.4 664.1 L740.9 678.2 L747.7 677.7 L742.3 690.3 L758.7 676.1 L751.6 675.6 Z"/>
<path class="md" d="M761.0 668.8 L746.4 682.2 L752.8 681.7 L747.7 693.6 L763.2 680.2 L756.5 679.7 Z"/>
<path class="md" d="M759.7 663.4 L743.4 678.3 L750.6 677.8 L744.9 691.0 L762.2 676.1 L754.7 675.5 Z"/>
<path class="mg" d="M766.7 673.4 L757.1 682.1 L761.3 681.8 L758.0 689.5 L768.1 680.8 L763.7 680.5 Z"/>
<path class="mg" d="M763.9 676.5 L753.8 685.7 L758.2 685.3 L754.8 693.5 L765.4 684.3 L760.8 684.0 Z"/>
<path class="mb" d="M786.0 657.7 L772.2 670.3 L778.2 669.9 L773.4 681.1 L788.0 668.5 L781.7 668.0 Z"/>
<path class="mb" d="M788.8 671.5 L777.5 681.8 L782.4 681.4 L778.6 690.5 L790.5 680.2 L785.3 679.9 Z"/>
<path class="md" d="M793.6 684.5 L776.9 699.7 L784.2 699.2 L778.4 712.7 L796.1 697.5 L788.4 696.9 Z"/>
<path class="md" d="M796.7 680.6 L780.9 695.0 L787.8 694.5 L782.4 707.3 L799.1 692.9 L791.8 692.4 Z"/>
<path class="md" d="M795.5 680.0 L777.9 696.0 L785.6 695.4 L779.5 709.6 L798.1 693.6 L790.0 693.0 Z"/>
<path class="mg" d="M503.6 390.9 L493.5 400.1 L497.9 399.7 L494.5 407.9 L505.1 398.7 L500.5 398.4 Z"/>
<path class="mb" d="M517.5 398.9 L505.6 409.8 L510.8 409.4 L506.6 419.1 L519.2 408.2 L513.8 407.8 Z"/>
<path class="mb" d="M515.2 395.2 L502.7 406.6 L508.2 406.2 L503.8 416.4 L517.1 405.0 L511.3 404.5 Z"/>
<path class="mb" d="M529.4 386.1 L520.7 394.1 L524.5 393.8 L521.5 400.9 L530.7 392.9 L526.7 392.6 Z"/>
<path class="mb" d="M586.0 394.3 L571.0 408.0 L577.5 407.5 L572.3 419.7 L588.2 406.0 L581.3 405.5 Z"/>
<path class="mb" d="M848.3 378.4 L835.8 389.8 L841.3 389.4 L836.9 399.6 L850.2 388.2 L844.4 387.7 Z"/>
<path class="mb" d="M858.3 375.4 L845.8 386.8 L851.3 386.4 L846.9 396.6 L860.2 385.2 L854.4 384.7 Z"/>
<path class="mb" d="M869.1 382.1 L856.0 394.1 L861.7 393.7 L857.2 404.3 L871.0 392.3 L865.0 391.9 Z"/>
<path class="mb" d="M867.9 380.3 L854.1 392.9 L860.1 392.5 L855.3 403.7 L869.9 391.1 L863.6 390.6 Z"/>
<path class="mb" d="M881.9 376.3 L868.1 388.9 L874.1 388.5 L869.3 399.7 L883.9 387.1 L877.6 386.6 Z"/>
<path class="mb" d="M870.6 387.2 L858.7 398.1 L863.9 397.7 L859.7 407.4 L872.3 396.5 L866.9 396.1 Z"/>
<path class="mb" d="M873.3 385.4 L860.8 396.8 L866.3 396.4 L861.9 406.6 L875.2 395.2 L869.4 394.7 Z"/>
<path class="mb" d="M853.6 407.8 L841.7 418.7 L846.9 418.3 L842.7 427.9 L855.3 417.1 L849.9 416.7 Z"/>
<path class="mb" d="M856.3 403.4 L843.8 414.8 L849.3 414.4 L844.9 424.6 L858.2 413.2 L852.4 412.7 Z"/>
<path class="mb" d="M900.1 360.9 L887.0 372.9 L892.7 372.5 L888.2 383.1 L902.0 371.1 L896.0 370.7 Z"/>
<path class="mb" d="M901.9 364.3 L888.1 376.9 L894.1 376.5 L889.3 387.7 L903.9 375.1 L897.6 374.6 Z"/>
<path class="mb" d="M904.6 355.3 L892.7 366.2 L897.9 365.8 L893.7 375.4 L906.3 364.6 L900.9 364.2 Z"/>
<path class="mb" d="M907.3 355.4 L894.8 366.8 L900.3 366.4 L895.9 376.6 L909.2 365.2 L903.4 364.7 Z"/>
<path class="mb" d="M837.8 352.5 L826.5 362.8 L831.4 362.4 L827.6 371.5 L839.5 361.2 L834.3 360.9 Z"/>
<path class="mb" d="M845.8 345.5 L834.5 355.8 L839.4 355.4 L835.6 364.5 L847.5 354.2 L842.3 353.9 Z"/>
<path class="mb" d="M862.8 340.5 L851.5 350.8 L856.4 350.4 L852.6 359.5 L864.5 349.2 L859.3 348.9 Z"/>
<path class="md" d="M826.0 363.5 L814.1 374.4 L819.3 374.0 L815.1 383.6 L827.7 372.8 L822.3 372.4 Z"/>
<path class="md" d="M828.7 360.4 L816.2 371.8 L821.7 371.4 L817.3 381.6 L830.6 370.2 L824.8 369.7 Z"/>
<path class="mb" d="M874.3 404.8 L864.7 413.5 L868.9 413.2 L865.6 420.9 L875.7 412.2 L871.3 411.9 Z"/>
<path class="mb" d="M876.0 402.7 L865.9 411.9 L870.3 411.5 L866.9 419.7 L877.5 410.5 L872.9 410.2 Z"/>
<path class="md" d="M858.1 496.3 L843.8 509.3 L850.0 508.8 L845.1 520.4 L860.2 507.4 L853.6 506.9 Z"/>
<path class="md" d="M861.4 492.3 L846.4 506.0 L852.9 505.5 L847.7 517.7 L863.6 504.0 L856.7 503.5 Z"/>
<path class="md" d="M871.1 502.8 L858.0 514.8 L863.7 514.3 L859.2 525.0 L873.0 513.0 L867.0 512.6 Z"/>
<path class="md" d="M873.9 500.3 L860.1 512.9 L866.1 512.5 L861.3 523.7 L875.9 511.1 L869.6 510.6 Z"/>
<path class="md" d="M857.1 509.2 L842.8 522.3 L849.0 521.8 L844.1 533.4 L859.2 520.3 L852.6 519.8 Z"/>
<path class="md" d="M854.4 509.3 L839.4 523.0 L845.9 522.5 L840.7 534.7 L856.6 521.0 L849.7 520.5 Z"/>
<path class="md" d="M885.9 488.3 L872.1 500.9 L878.1 500.5 L873.3 511.7 L887.9 499.1 L881.6 498.6 Z"/>
<path class="md" d="M900.9 483.3 L887.1 495.9 L893.1 495.5 L888.3 506.7 L902.9 494.1 L896.6 493.6 Z"/>
<path class="md" d="M908.6 499.6 L896.7 510.5 L901.9 510.1 L897.7 519.8 L910.3 508.9 L904.9 508.5 Z"/>
<path class="md" d="M907.8 498.0 L896.5 508.3 L901.4 508.0 L897.6 517.1 L909.5 506.8 L904.3 506.4 Z"/>
<path class="md" d="M910.3 499.4 L897.8 510.8 L903.3 510.4 L898.9 520.6 L912.2 509.2 L906.4 508.7 Z"/>
<path class="md" d="M780.9 536.3 L767.1 548.9 L773.1 548.5 L768.3 559.7 L782.9 547.1 L776.6 546.6 Z"/>
<path class="md" d="M790.9 563.3 L777.1 575.9 L783.1 575.5 L778.3 586.7 L792.9 574.1 L786.6 573.6 Z"/>
</svg>
</div>
<div id="wrap">
 <div id="panel"><div id="pc">
  <div class="t" style="left:15px;top:18.2px;font-size:19px;line-height:24px;font-weight:bold;color:#e3e3e3">Generation</div>
  <div style="position:absolute;left:16px;top:41px;width:210px;height:1.3px;background:#f0f0f0"></div>
  <svg width="1024" height="784" style="position:absolute;left:0;top:0">
   <circle cx="241.8" cy="28.9" r="13" fill="none" stroke="#2ab3d6" stroke-width="1.8"/>
   <path d="M237.6 24.2 L246 34.8 M246 24.2 L237.6 34.8" stroke="#2ab3d6" stroke-width="1.3" fill="none"/>
   <g fill="#a6a6a6">
    <path d="M47 89.6 L60 96 L60 109.3 L47 115.6 L34 109.3 L34 96 Z"/>
    <path d="M39.3 125.1 L54.1 125.1 Q52.3 132.5 54.6 140.4 L59.2 151.1 L34.4 151.1 L38.3 140.4 Q41.2 132.5 39.3 125.1 Z"/>
    <path d="M36.3 166.2 C38 167 41 169 42.8 171.6 C42 168 41.5 166 43 164.5 C45 162.5 48 161.5 49.9 160.1 C47.5 162 47 164.5 48 166.5 C49.5 168.5 52 170 52.6 173.8 L53.4 169.9 C57 172 60 175 59.9 178 C59.5 182 55 184 50 185 C46 185.8 43 186 41.2 185.6 C40.5 184.5 41.5 183 43 182.5 C39 182 35 180 33.9 176.5 C33.5 173.5 36 171 37.5 169.5 C37.8 168.5 37.3 167.2 36.3 166.2 Z"/>
    <path d="M32 213.7 C38.4 210.5 45.5 207.9 47.3 201.6 C47.8 198.5 43.75 197.1 40.2 198.5 C42.9 195.4 47.3 194.5 50.9 195.4 C57.1 197.1 61.8 204 61.8 209.6 L61.8 221.25 L32 221.25 Z"/>
    <path d="M58 229.7 Q54.8 237 54.1 242.7 Q54.8 249 58 257 Q52.5 248.5 49 245.8 Q42 244.4 33.9 243.6 Q42 242.4 49 239.7 Q53.5 235.5 58 229.7 Z"/>
    <path d="M46.90 264.50 L48.91 268.20 L52.18 265.55 L52.62 269.74 L56.66 268.54 L55.46 272.58 L59.65 273.02 L57.00 276.29 L60.70 278.30 L57.00 280.31 L59.65 283.58 L55.46 284.02 L56.66 288.06 L52.62 286.86 L52.18 291.05 L48.91 288.40 L46.90 292.10 L44.89 288.40 L41.62 291.05 L41.18 286.86 L37.14 288.06 L38.34 284.02 L34.15 283.58 L36.80 280.31 L33.10 278.30 L36.80 276.29 L34.15 273.02 L38.34 272.58 L37.14 268.54 L41.18 269.74 L41.62 265.55 L44.89 268.20 Z"/>
    <path d="M42 300.2 L52.2 300.2 L52.2 302.6 L42 302.6 Z M37.5 325 L56.7 325 L56.7 327 L37.5 327 Z M40.3 308.3 L53.9 308.3 L53.9 310 L40.3 310 Z"/>
    <path d="M57.6 333.1 C50 336 40 336.5 36 342.5 C33 347.5 34.5 352.5 38.8 356 L38.2 360 L40.8 360 L41.4 357.2 C50 358.5 57.3 352 58.6 344 C59.2 340 58.6 336 57.6 333.1 Z"/>
    <path d="M53.8 369.7 L38.8 384 L45.6 383.2 L40.2 396.1 L55.8 381.8 L48.8 381.6 Z"/>
   </g>
   <circle cx="46.9" cy="278.3" r="7.9" fill="none" stroke="#48494e" stroke-width="0.8"/>
   <g stroke="#a6a6a6" fill="none">
    <path d="M43.2 302 L39.2 325.5 M51 302 L55 325.5" stroke-width="1.9"/>
    <path d="M40.5 317.1 L53.7 317.1" stroke-width="1.4"/>
    <path d="M43 302.5 L52.6 309 M51.2 302.5 L41.6 309 M42 309.5 L53.2 317 M52.2 309.5 L41 317 M40.8 317.5 L54.6 325 M53.4 317.5 L39.6 325" stroke-width="1.1"/>
   </g>
   <path d="M46 345.5 C42.5 348 40.5 351.5 40 356.5" stroke="#48494e" stroke-width="1.3" fill="none"/>
   <path d="M46.5 177 C46 179.5 44 181.5 41.5 182.5" stroke="#48494e" stroke-width="1" fill="none"/>
  </svg>
  <div class="t" style="left:4px;top:128px;font-size:14px;color:rgba(255,255,255,.022)">Flagstaff</div>
  <div class="t" style="left:8px;top:183px;font-size:14px;font-weight:bold;letter-spacing:2px;color:rgba(255,255,255,.022)">ARIZONA</div>
  <div class="t" style="left:-8px;top:243px;font-size:14px;color:rgba(255,255,255,.022)">Phoenix</div>
  <div class="t" style="left:33px;top:517px;font-size:14px;color:rgba(255,255,255,.022)">Hermosillo</div>
  <div class="t" style="left:31.5px;top:63.95px;font-size:14px">Fuel Type</div>
  <div class="t" style="left:71.3px;top:93.7px">Coal</div>
  <div class="t" style="left:71.3px;top:128.7px">Nuclear</div>
  <div class="t" style="left:71.3px;top:163.7px">Gas</div>
  <div class="t" style="left:71.3px;top:198.7px">Hydro</div>
  <div class="t" style="left:71.3px;top:233.7px">Wind</div>
  <div class="t" style="left:71.3px;top:268.7px">Solar</div>
  <div class="t" style="left:71.3px;top:303.7px">Oil</div>
  <div class="t" style="left:71.3px;top:338.7px">Renewable</div>
  <div class="t" style="left:71.3px;top:373.7px">Other</div>
  <div class="t" style="left:31px;top:436.35px;font-size:14px">Status</div>
  <div class="sw" style="top:458.8px;background:#eb9e7b"></div>
  <div class="sw" style="top:491.8px;background:#4aa8de"></div>
  <div class="sw" style="top:533px;background:#13283a"></div>
  <div class="sw" style="top:573.8px;background:#2f6e1f"></div>
  <div class="sw" style="top:650.9px;background:#8b3f12"></div>
  <div class="sw" style="top:728.3px;background:#22441a"></div>
  <div class="t" style="left:121.5px;top:460.9px">Conceptual</div>
  <div class="t" style="left:121.5px;top:485.2px">Early<br>Development</div>
  <div class="t" style="left:121.5px;top:525.3px">Advanced<br>Development</div>
  <div class="t" style="left:121.5px;top:566.5px">Under<br>Construction</div>
  <div class="t" style="left:121.5px;top:607.5px">Partial<br>Operations<br>(Under<br>Construction) /<br>Under<br>Evaluation</div>
  <div class="t" style="left:121.5px;top:720.8px">Partial<br>Operations</div>
 </div></div>
 <div class="vthumb"></div>
 <div class="hthumb"></div>
</div>
<div id="tip"><span style="position:absolute;left:1.8px;top:1.8px;font-weight:bold">ers</span></div>
</body></html>
